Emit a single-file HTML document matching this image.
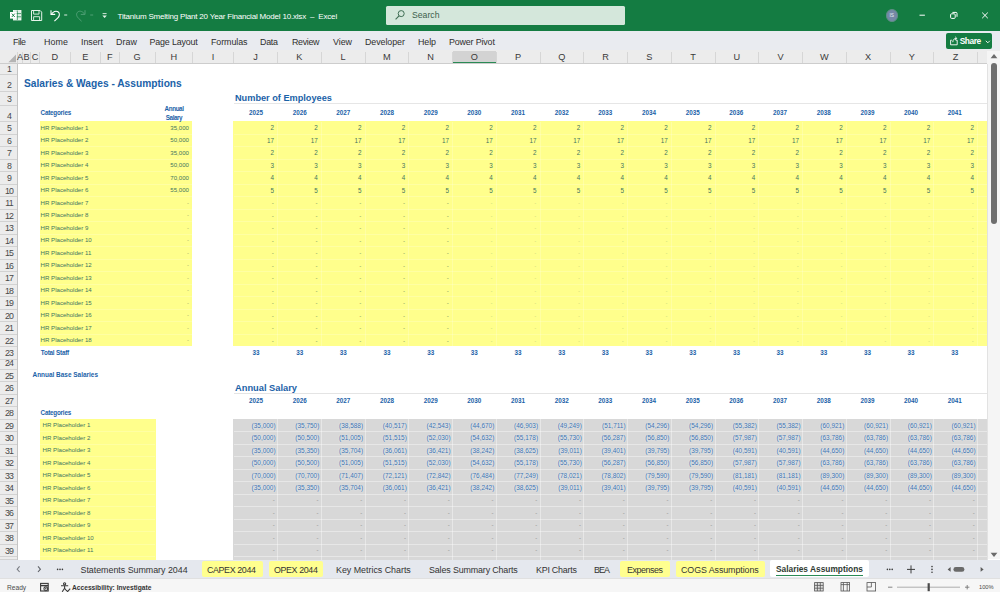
<!DOCTYPE html>
<html lang="en"><head><meta charset="utf-8"><title>Titanium Smelting Plant 20 Year Financial Model 10.xlsx - Excel</title>
<style>
html,body{margin:0;padding:0;}
body{width:1000px;height:592px;overflow:hidden;background:#fff;font-family:"Liberation Sans",Arial,sans-serif;}
#app{position:relative;width:1000px;height:592px;overflow:hidden;background:#fff;}
#app div,#app span,#app svg{position:absolute;}
#app span{white-space:nowrap;display:block;}
#app span.h{text-shadow:0 0 1px rgba(236,244,252,0.95),0 0 2px rgba(236,244,252,0.8);}
</style></head><body><div id="app">
<div style="left:0px;top:0px;width:1000px;height:30.6px;background:#147c42;"></div>
<div style="left:385.7px;top:5.8px;width:239.6px;height:19.6px;background:#d4e7db;border-radius:1.5px;"></div>
<svg style="left:394px;top:9px" width="12" height="12" viewBox="0 0 12 12"><circle cx="7.2" cy="4.6" r="3" fill="none" stroke="#3f6e54" stroke-width="1"/><path d="M5 6.9 L1.6 10.4" stroke="#3f6e54" stroke-width="1.1" fill="none"/></svg>
<span style="left:412px;top:10px;font-size:8.68px;line-height:10px;color:#3d5f4c;">Search</span>
<span style="left:117.5px;top:12px;font-size:8px;line-height:9px;color:#ffffff;letter-spacing:-0.19px;">Titanium Smelting Plant 20 Year Financial Model 10.xlsx  –  Excel</span>
<svg style="left:0;top:0" width="116" height="31" viewBox="0 0 116 31">
<g fill="none" stroke="#fff" stroke-width="1">
 <!-- excel logo -->
 <rect x="13.5" y="10.5" width="7.5" height="9.5" fill="#dff0e5" stroke="#fff" stroke-width="0.8"/>
 <path d="M13.5 13.6H21M13.5 16.8H21M17.3 10.5V20" stroke="#107c41" stroke-width="0.7"/>
 <rect x="10" y="12" width="6.6" height="6.6" fill="#fff" stroke="none"/>
 <path d="M11.8 13.6l3 3.4M14.8 13.6l-3 3.4" stroke="#107c41" stroke-width="0.9"/>
 <!-- save -->
 <path d="M31.5 10.5h8.6l1.6 1.6v8.4h-10.2z" stroke="#e6f3ea"/>
 <path d="M33.6 10.5v3.6h5.4v-3.6M33.6 20.5v-3.8h6v3.8" stroke="#e6f3ea" stroke-width="0.9"/>
 <!-- undo -->
 <path d="M51 10.2v4.2h4.2" stroke="#fff" stroke-width="1.1"/>
 <path d="M51.4 14.2c1.6-2.6 4.6-3.8 6.6-2.4 2.2 1.6 1.6 4.4-0.4 6.4l-3.2 3" stroke="#fff" stroke-width="1.1"/>
 <path d="M64.2 15h3" stroke="#d8ecdf" stroke-width="1"/>
 <!-- redo (disabled) -->
 <path d="M85 10.2v4.2h-4.2" stroke="#4f9f75" stroke-width="1"/>
 <path d="M84.6 14.2c-1.6-2.6-4.6-3.8-6.6-2.4-2.2 1.6-1.6 4.4 0.4 6.4l3.2 3" stroke="#4f9f75" stroke-width="1"/>
 <path d="M90.2 15h3" stroke="#4f9f75" stroke-width="1"/>
 <!-- customize -->
 <path d="M102.6 13.6h4" stroke="#e6f3ea" stroke-width="0.9"/>
 <path d="M102.4 15.6h4.4l-2.2 2.4z" fill="#e6f3ea" stroke="none"/>
</g></svg>
<div style="left:885.7px;top:9.4px;width:12.2px;height:12.2px;border-radius:50%;background:#7488a6;border:1px solid #5f8f86;box-sizing:border-box;"></div>
<span style="left:889.53px;top:13px;font-size:4.8px;line-height:5px;color:#e6edf5;">IS</span>
<svg style="left:900px;top:0" width="100" height="31" viewBox="0 0 100 31"><g fill="none" stroke="#fff" stroke-width="1">
<path d="M19.5 15.2h5.4"/>
<rect x="50.6" y="13.8" width="4.6" height="4.6" rx="1"/>
<path d="M52.4 12.4h3.6q1 0 1 1v3.4" />
<path d="M82.2 12.6l5.6 5.6M87.8 12.6l-5.6 5.6"/>
</g></svg>
<div style="left:0px;top:30.6px;width:1000px;height:20px;background:#e9ebf0;"></div>
<span style="left:13px;top:37px;font-size:8.9px;line-height:10px;color:#2e2e2e;letter-spacing:-0.45px;">File</span>
<span style="left:44px;top:37px;font-size:8.9px;line-height:10px;color:#2e2e2e;letter-spacing:0.09px;">Home</span>
<span style="left:81px;top:37px;font-size:8.9px;line-height:10px;color:#2e2e2e;letter-spacing:-0.05px;">Insert</span>
<span style="left:116px;top:37px;font-size:8.9px;line-height:10px;color:#2e2e2e;letter-spacing:0.08px;">Draw</span>
<span style="left:149.5px;top:37px;font-size:8.9px;line-height:10px;color:#2e2e2e;letter-spacing:-0.15px;">Page Layout</span>
<span style="left:211px;top:37px;font-size:8.9px;line-height:10px;color:#2e2e2e;letter-spacing:-0.08px;">Formulas</span>
<span style="left:260px;top:37px;font-size:8.9px;line-height:10px;color:#2e2e2e;letter-spacing:-0.27px;">Data</span>
<span style="left:292px;top:37px;font-size:8.9px;line-height:10px;color:#2e2e2e;letter-spacing:-0.34px;">Review</span>
<span style="left:333px;top:37px;font-size:8.9px;line-height:10px;color:#2e2e2e;letter-spacing:-0.04px;">View</span>
<span style="left:365px;top:37px;font-size:8.9px;line-height:10px;color:#2e2e2e;letter-spacing:-0.07px;">Developer</span>
<span style="left:418px;top:37px;font-size:8.9px;line-height:10px;color:#2e2e2e;letter-spacing:-0.1px;">Help</span>
<span style="left:449px;top:37px;font-size:8.9px;line-height:10px;color:#2e2e2e;letter-spacing:-0.15px;">Power Pivot</span>
<div style="left:946px;top:33.2px;width:46.4px;height:15.4px;background:#147c42;border-radius:2px;"></div>
<svg style="left:949px;top:35px" width="12" height="12" viewBox="0 0 12 12"><g fill="none" stroke="#fff" stroke-width="0.9"><path d="M1.6 5.2v4.6h6.6v-4.6h-1.6M1.6 5.2h1.2"/><path d="M3.8 7.2c0-2.4 1.4-3.8 3.6-3.8M6.2 1.8l1.6 1.6-1.6 1.6"/></g></svg>
<span style="left:959.7px;top:36px;font-size:8.4px;line-height:10px;color:#ffffff;letter-spacing:-0.44px;font-weight:bold;">Share</span>
<svg style="left:984.5px;top:38.5px" width="6" height="6" viewBox="0 0 6 6"><path d="M0.8 1.8l2 2 2-2" fill="none" stroke="#fff" stroke-width="0.9"/></svg>
<div style="left:0px;top:49.8px;width:1000px;height:13.7px;background:#ececec;"></div>
<div style="left:22px;top:51.6px;width:1px;height:11.9px;background:#d6d6d6;"></div>
<div style="left:30.1px;top:51.6px;width:1px;height:11.9px;background:#d6d6d6;"></div>
<div style="left:38.9px;top:51.6px;width:1px;height:11.9px;background:#d6d6d6;"></div>
<div style="left:69.5px;top:51.6px;width:1px;height:11.9px;background:#d6d6d6;"></div>
<div style="left:100.1px;top:51.6px;width:1px;height:11.9px;background:#d6d6d6;"></div>
<div style="left:118.5px;top:51.6px;width:1px;height:11.9px;background:#d6d6d6;"></div>
<div style="left:154.5px;top:51.6px;width:1px;height:11.9px;background:#d6d6d6;"></div>
<div style="left:192px;top:51.6px;width:1px;height:11.9px;background:#d6d6d6;"></div>
<div style="left:233.25px;top:51.6px;width:1px;height:11.9px;background:#d6d6d6;"></div>
<div style="left:277px;top:51.6px;width:1px;height:11.9px;background:#d6d6d6;"></div>
<div style="left:320.75px;top:51.6px;width:1px;height:11.9px;background:#d6d6d6;"></div>
<div style="left:364.5px;top:51.6px;width:1px;height:11.9px;background:#d6d6d6;"></div>
<div style="left:408.25px;top:51.6px;width:1px;height:11.9px;background:#d6d6d6;"></div>
<div style="left:452px;top:51.6px;width:1px;height:11.9px;background:#d6d6d6;"></div>
<div style="left:452.5px;top:51px;width:43.75px;height:12.5px;background:#d3d3d3;"></div>
<div style="left:452.5px;top:62.1px;width:43.75px;height:1.4px;background:#2a8a55;"></div>
<div style="left:495.75px;top:51.6px;width:1px;height:11.9px;background:#d6d6d6;"></div>
<div style="left:539.5px;top:51.6px;width:1px;height:11.9px;background:#d6d6d6;"></div>
<div style="left:583.25px;top:51.6px;width:1px;height:11.9px;background:#d6d6d6;"></div>
<div style="left:627px;top:51.6px;width:1px;height:11.9px;background:#d6d6d6;"></div>
<div style="left:670.75px;top:51.6px;width:1px;height:11.9px;background:#d6d6d6;"></div>
<div style="left:714.5px;top:51.6px;width:1px;height:11.9px;background:#d6d6d6;"></div>
<div style="left:758.25px;top:51.6px;width:1px;height:11.9px;background:#d6d6d6;"></div>
<div style="left:802px;top:51.6px;width:1px;height:11.9px;background:#d6d6d6;"></div>
<div style="left:845.75px;top:51.6px;width:1px;height:11.9px;background:#d6d6d6;"></div>
<div style="left:889.5px;top:51.6px;width:1px;height:11.9px;background:#d6d6d6;"></div>
<div style="left:933.25px;top:51.6px;width:1px;height:11.9px;background:#d6d6d6;"></div>
<div style="left:977px;top:51.6px;width:1px;height:11.9px;background:#d6d6d6;"></div>
<div style="left:986.8px;top:51.6px;width:1px;height:11.9px;background:#d6d6d6;"></div>
<div style="left:17.2px;top:51.6px;width:1px;height:11.9px;background:#d6d6d6;"></div>
<svg style="left:7px;top:54px" width="10" height="9" viewBox="0 0 10 9"><path d="M9 0.6V8.2H1.4z" fill="#b4b4b4"/></svg>
<span style="left:17.03px;top:52px;font-size:9.2px;line-height:10px;color:#3a3a3a;">A</span>
<span style="left:23.48px;top:52px;font-size:9.2px;line-height:10px;color:#3a3a3a;">B</span>
<span style="left:31.68px;top:52px;font-size:9.2px;line-height:10px;color:#3a3a3a;">C</span>
<span style="left:51.38px;top:52px;font-size:9.2px;line-height:10px;color:#3a3a3a;">D</span>
<span style="left:82.23px;top:52px;font-size:9.2px;line-height:10px;color:#3a3a3a;">E</span>
<span style="left:106.99px;top:52px;font-size:9.2px;line-height:10px;color:#3a3a3a;">F</span>
<span style="left:133.42px;top:52px;font-size:9.2px;line-height:10px;color:#3a3a3a;">G</span>
<span style="left:170.43px;top:52px;font-size:9.2px;line-height:10px;color:#3a3a3a;">H</span>
<span style="left:211.85px;top:52px;font-size:9.2px;line-height:10px;color:#3a3a3a;">I</span>
<span style="left:253.32px;top:52px;font-size:9.2px;line-height:10px;color:#3a3a3a;">J</span>
<span style="left:296.31px;top:52px;font-size:9.2px;line-height:10px;color:#3a3a3a;">K</span>
<span style="left:340.57px;top:52px;font-size:9.2px;line-height:10px;color:#3a3a3a;">L</span>
<span style="left:383.04px;top:52px;font-size:9.2px;line-height:10px;color:#3a3a3a;">M</span>
<span style="left:427.3px;top:52px;font-size:9.2px;line-height:10px;color:#3a3a3a;">N</span>
<span style="left:470.8px;top:52px;font-size:9.2px;line-height:10px;color:#3a3a3a;">O</span>
<span style="left:515.06px;top:52px;font-size:9.2px;line-height:10px;color:#3a3a3a;">P</span>
<span style="left:558.3px;top:52px;font-size:9.2px;line-height:10px;color:#3a3a3a;">Q</span>
<span style="left:602.3px;top:52px;font-size:9.2px;line-height:10px;color:#3a3a3a;">R</span>
<span style="left:646.31px;top:52px;font-size:9.2px;line-height:10px;color:#3a3a3a;">S</span>
<span style="left:690.32px;top:52px;font-size:9.2px;line-height:10px;color:#3a3a3a;">T</span>
<span style="left:733.55px;top:52px;font-size:9.2px;line-height:10px;color:#3a3a3a;">U</span>
<span style="left:777.56px;top:52px;font-size:9.2px;line-height:10px;color:#3a3a3a;">V</span>
<span style="left:820.03px;top:52px;font-size:9.2px;line-height:10px;color:#3a3a3a;">W</span>
<span style="left:865.06px;top:52px;font-size:9.2px;line-height:10px;color:#3a3a3a;">X</span>
<span style="left:908.81px;top:52px;font-size:9.2px;line-height:10px;color:#3a3a3a;">Y</span>
<span style="left:952.82px;top:52px;font-size:9.2px;line-height:10px;color:#3a3a3a;">Z</span>
<div style="left:0px;top:63px;width:987.3px;height:1px;background:#cdcdcd;"></div>
<div style="left:0px;top:63.5px;width:17.7px;height:496px;background:#ececec;"></div>
<div style="left:0px;top:73.8px;width:17.7px;height:1px;background:#d2d2d2;"></div>
<span style="left:6.95px;top:64px;font-size:8.8px;line-height:10px;color:#484848;letter-spacing:-0.3px;">1</span>
<div style="left:0px;top:90.5px;width:17.7px;height:1px;background:#d2d2d2;"></div>
<span style="left:6.95px;top:80px;font-size:8.8px;line-height:10px;color:#484848;letter-spacing:-0.3px;">2</span>
<div style="left:0px;top:104.5px;width:17.7px;height:1px;background:#d2d2d2;"></div>
<span style="left:6.95px;top:94px;font-size:8.8px;line-height:10px;color:#484848;letter-spacing:-0.3px;">3</span>
<div style="left:0px;top:121px;width:17.7px;height:1px;background:#d2d2d2;"></div>
<span style="left:6.95px;top:111px;font-size:8.8px;line-height:10px;color:#484848;letter-spacing:-0.3px;">4</span>
<div style="left:0px;top:133.5px;width:17.7px;height:1px;background:#d2d2d2;"></div>
<span style="left:6.95px;top:123px;font-size:8.8px;line-height:10px;color:#484848;letter-spacing:-0.3px;">5</span>
<div style="left:0px;top:146px;width:17.7px;height:1px;background:#d2d2d2;"></div>
<span style="left:6.95px;top:136px;font-size:8.8px;line-height:10px;color:#484848;letter-spacing:-0.3px;">6</span>
<div style="left:0px;top:158.5px;width:17.7px;height:1px;background:#d2d2d2;"></div>
<span style="left:6.95px;top:148px;font-size:8.8px;line-height:10px;color:#484848;letter-spacing:-0.3px;">7</span>
<div style="left:0px;top:171px;width:17.7px;height:1px;background:#d2d2d2;"></div>
<span style="left:6.95px;top:161px;font-size:8.8px;line-height:10px;color:#484848;letter-spacing:-0.3px;">8</span>
<div style="left:0px;top:183.5px;width:17.7px;height:1px;background:#d2d2d2;"></div>
<span style="left:6.95px;top:173px;font-size:8.8px;line-height:10px;color:#484848;letter-spacing:-0.3px;">9</span>
<div style="left:0px;top:196px;width:17.7px;height:1px;background:#d2d2d2;"></div>
<span style="left:4.93px;top:186px;font-size:8.8px;line-height:10px;color:#484848;letter-spacing:-0.85px;">10</span>
<div style="left:0px;top:208.5px;width:17.7px;height:1px;background:#d2d2d2;"></div>
<span style="left:5.26px;top:198px;font-size:8.8px;line-height:10px;color:#484848;letter-spacing:-0.85px;">11</span>
<div style="left:0px;top:221px;width:17.7px;height:1px;background:#d2d2d2;"></div>
<span style="left:4.93px;top:211px;font-size:8.8px;line-height:10px;color:#484848;letter-spacing:-0.85px;">12</span>
<div style="left:0px;top:233.5px;width:17.7px;height:1px;background:#d2d2d2;"></div>
<span style="left:4.93px;top:223px;font-size:8.8px;line-height:10px;color:#484848;letter-spacing:-0.85px;">13</span>
<div style="left:0px;top:246px;width:17.7px;height:1px;background:#d2d2d2;"></div>
<span style="left:4.93px;top:236px;font-size:8.8px;line-height:10px;color:#484848;letter-spacing:-0.85px;">14</span>
<div style="left:0px;top:258.5px;width:17.7px;height:1px;background:#d2d2d2;"></div>
<span style="left:4.93px;top:248px;font-size:8.8px;line-height:10px;color:#484848;letter-spacing:-0.85px;">15</span>
<div style="left:0px;top:271px;width:17.7px;height:1px;background:#d2d2d2;"></div>
<span style="left:4.93px;top:261px;font-size:8.8px;line-height:10px;color:#484848;letter-spacing:-0.85px;">16</span>
<div style="left:0px;top:283.5px;width:17.7px;height:1px;background:#d2d2d2;"></div>
<span style="left:4.93px;top:273px;font-size:8.8px;line-height:10px;color:#484848;letter-spacing:-0.85px;">17</span>
<div style="left:0px;top:296px;width:17.7px;height:1px;background:#d2d2d2;"></div>
<span style="left:4.93px;top:286px;font-size:8.8px;line-height:10px;color:#484848;letter-spacing:-0.85px;">18</span>
<div style="left:0px;top:308.5px;width:17.7px;height:1px;background:#d2d2d2;"></div>
<span style="left:4.93px;top:298px;font-size:8.8px;line-height:10px;color:#484848;letter-spacing:-0.85px;">19</span>
<div style="left:0px;top:321px;width:17.7px;height:1px;background:#d2d2d2;"></div>
<span style="left:4.93px;top:311px;font-size:8.8px;line-height:10px;color:#484848;letter-spacing:-0.85px;">20</span>
<div style="left:0px;top:333.5px;width:17.7px;height:1px;background:#d2d2d2;"></div>
<span style="left:4.93px;top:323px;font-size:8.8px;line-height:10px;color:#484848;letter-spacing:-0.85px;">21</span>
<div style="left:0px;top:346px;width:17.7px;height:1px;background:#d2d2d2;"></div>
<span style="left:4.93px;top:336px;font-size:8.8px;line-height:10px;color:#484848;letter-spacing:-0.85px;">22</span>
<div style="left:0px;top:358.5px;width:17.7px;height:1px;background:#d2d2d2;"></div>
<span style="left:4.93px;top:348px;font-size:8.8px;line-height:10px;color:#484848;letter-spacing:-0.85px;">23</span>
<div style="left:0px;top:368.5px;width:17.7px;height:1px;background:#d2d2d2;"></div>
<span style="left:4.93px;top:358px;font-size:8.8px;line-height:10px;color:#484848;letter-spacing:-0.85px;">24</span>
<div style="left:0px;top:381px;width:17.7px;height:1px;background:#d2d2d2;"></div>
<span style="left:4.93px;top:371px;font-size:8.8px;line-height:10px;color:#484848;letter-spacing:-0.85px;">25</span>
<div style="left:0px;top:393.5px;width:17.7px;height:1px;background:#d2d2d2;"></div>
<span style="left:4.93px;top:383px;font-size:8.8px;line-height:10px;color:#484848;letter-spacing:-0.85px;">26</span>
<div style="left:0px;top:406px;width:17.7px;height:1px;background:#d2d2d2;"></div>
<span style="left:4.93px;top:396px;font-size:8.8px;line-height:10px;color:#484848;letter-spacing:-0.85px;">27</span>
<div style="left:0px;top:418.5px;width:17.7px;height:1px;background:#d2d2d2;"></div>
<span style="left:4.93px;top:408px;font-size:8.8px;line-height:10px;color:#484848;letter-spacing:-0.85px;">28</span>
<div style="left:0px;top:431px;width:17.7px;height:1px;background:#d2d2d2;"></div>
<span style="left:4.93px;top:421px;font-size:8.8px;line-height:10px;color:#484848;letter-spacing:-0.85px;">29</span>
<div style="left:0px;top:443.5px;width:17.7px;height:1px;background:#d2d2d2;"></div>
<span style="left:4.93px;top:433px;font-size:8.8px;line-height:10px;color:#484848;letter-spacing:-0.85px;">30</span>
<div style="left:0px;top:456px;width:17.7px;height:1px;background:#d2d2d2;"></div>
<span style="left:4.93px;top:446px;font-size:8.8px;line-height:10px;color:#484848;letter-spacing:-0.85px;">31</span>
<div style="left:0px;top:468.5px;width:17.7px;height:1px;background:#d2d2d2;"></div>
<span style="left:4.93px;top:458px;font-size:8.8px;line-height:10px;color:#484848;letter-spacing:-0.85px;">32</span>
<div style="left:0px;top:481px;width:17.7px;height:1px;background:#d2d2d2;"></div>
<span style="left:4.93px;top:471px;font-size:8.8px;line-height:10px;color:#484848;letter-spacing:-0.85px;">33</span>
<div style="left:0px;top:493.5px;width:17.7px;height:1px;background:#d2d2d2;"></div>
<span style="left:4.93px;top:483px;font-size:8.8px;line-height:10px;color:#484848;letter-spacing:-0.85px;">34</span>
<div style="left:0px;top:506px;width:17.7px;height:1px;background:#d2d2d2;"></div>
<span style="left:4.93px;top:496px;font-size:8.8px;line-height:10px;color:#484848;letter-spacing:-0.85px;">35</span>
<div style="left:0px;top:518.5px;width:17.7px;height:1px;background:#d2d2d2;"></div>
<span style="left:4.93px;top:508px;font-size:8.8px;line-height:10px;color:#484848;letter-spacing:-0.85px;">36</span>
<div style="left:0px;top:531px;width:17.7px;height:1px;background:#d2d2d2;"></div>
<span style="left:4.93px;top:521px;font-size:8.8px;line-height:10px;color:#484848;letter-spacing:-0.85px;">37</span>
<div style="left:0px;top:543.5px;width:17.7px;height:1px;background:#d2d2d2;"></div>
<span style="left:4.93px;top:533px;font-size:8.8px;line-height:10px;color:#484848;letter-spacing:-0.85px;">38</span>
<div style="left:0px;top:556px;width:17.7px;height:1px;background:#d2d2d2;"></div>
<span style="left:4.93px;top:546px;font-size:8.8px;line-height:10px;color:#484848;letter-spacing:-0.85px;">39</span>
<div style="left:0px;top:559px;width:17.7px;height:1px;background:#d2d2d2;"></div>
<div style="left:17.2px;top:63.5px;width:1px;height:496px;background:#c4c4c4;"></div>
<div style="left:39.7px;top:121.2px;width:152.1px;height:225.3px;background:#ffff8c;"></div>
<div style="left:233.35px;top:121.2px;width:753.95px;height:225.3px;background:#ffff8c;"></div>
<div style="left:39.7px;top:419px;width:116.2px;height:140.5px;background:#ffff8c;"></div>
<div style="left:233.35px;top:419px;width:753.95px;height:140.5px;background:#d8d8d8;"></div>
<div style="left:39.4px;top:133.5px;width:153.1px;height:0.8px;background:rgba(255,255,255,0.2);"></div>
<div style="left:233.75px;top:133.5px;width:753.55px;height:0.8px;background:rgba(255,255,255,0.2);"></div>
<div style="left:39.4px;top:146px;width:153.1px;height:0.8px;background:rgba(255,255,255,0.2);"></div>
<div style="left:233.75px;top:146px;width:753.55px;height:0.8px;background:rgba(255,255,255,0.2);"></div>
<div style="left:39.4px;top:158.5px;width:153.1px;height:0.8px;background:rgba(255,255,255,0.2);"></div>
<div style="left:233.75px;top:158.5px;width:753.55px;height:0.8px;background:rgba(255,255,255,0.2);"></div>
<div style="left:39.4px;top:171px;width:153.1px;height:0.8px;background:rgba(255,255,255,0.2);"></div>
<div style="left:233.75px;top:171px;width:753.55px;height:0.8px;background:rgba(255,255,255,0.2);"></div>
<div style="left:39.4px;top:183.5px;width:153.1px;height:0.8px;background:rgba(255,255,255,0.2);"></div>
<div style="left:233.75px;top:183.5px;width:753.55px;height:0.8px;background:rgba(255,255,255,0.2);"></div>
<div style="left:39.4px;top:196px;width:153.1px;height:0.8px;background:rgba(255,255,255,0.2);"></div>
<div style="left:233.75px;top:196px;width:753.55px;height:0.8px;background:rgba(255,255,255,0.2);"></div>
<div style="left:39.4px;top:208.5px;width:153.1px;height:0.8px;background:rgba(255,255,255,0.2);"></div>
<div style="left:233.75px;top:208.5px;width:753.55px;height:0.8px;background:rgba(255,255,255,0.2);"></div>
<div style="left:39.4px;top:221px;width:153.1px;height:0.8px;background:rgba(255,255,255,0.2);"></div>
<div style="left:233.75px;top:221px;width:753.55px;height:0.8px;background:rgba(255,255,255,0.2);"></div>
<div style="left:39.4px;top:233.5px;width:153.1px;height:0.8px;background:rgba(255,255,255,0.2);"></div>
<div style="left:233.75px;top:233.5px;width:753.55px;height:0.8px;background:rgba(255,255,255,0.2);"></div>
<div style="left:39.4px;top:246px;width:153.1px;height:0.8px;background:rgba(255,255,255,0.2);"></div>
<div style="left:233.75px;top:246px;width:753.55px;height:0.8px;background:rgba(255,255,255,0.2);"></div>
<div style="left:39.4px;top:258.5px;width:153.1px;height:0.8px;background:rgba(255,255,255,0.2);"></div>
<div style="left:233.75px;top:258.5px;width:753.55px;height:0.8px;background:rgba(255,255,255,0.2);"></div>
<div style="left:39.4px;top:271px;width:153.1px;height:0.8px;background:rgba(255,255,255,0.2);"></div>
<div style="left:233.75px;top:271px;width:753.55px;height:0.8px;background:rgba(255,255,255,0.2);"></div>
<div style="left:39.4px;top:283.5px;width:153.1px;height:0.8px;background:rgba(255,255,255,0.2);"></div>
<div style="left:233.75px;top:283.5px;width:753.55px;height:0.8px;background:rgba(255,255,255,0.2);"></div>
<div style="left:39.4px;top:296px;width:153.1px;height:0.8px;background:rgba(255,255,255,0.2);"></div>
<div style="left:233.75px;top:296px;width:753.55px;height:0.8px;background:rgba(255,255,255,0.2);"></div>
<div style="left:39.4px;top:308.5px;width:153.1px;height:0.8px;background:rgba(255,255,255,0.2);"></div>
<div style="left:233.75px;top:308.5px;width:753.55px;height:0.8px;background:rgba(255,255,255,0.2);"></div>
<div style="left:39.4px;top:321px;width:153.1px;height:0.8px;background:rgba(255,255,255,0.2);"></div>
<div style="left:233.75px;top:321px;width:753.55px;height:0.8px;background:rgba(255,255,255,0.2);"></div>
<div style="left:39.4px;top:333.5px;width:153.1px;height:0.8px;background:rgba(255,255,255,0.2);"></div>
<div style="left:233.75px;top:333.5px;width:753.55px;height:0.8px;background:rgba(255,255,255,0.2);"></div>
<div style="left:39.4px;top:346px;width:153.1px;height:0.8px;background:rgba(255,255,255,0.2);"></div>
<div style="left:233.75px;top:346px;width:753.55px;height:0.8px;background:rgba(255,255,255,0.2);"></div>
<div style="left:39.4px;top:431px;width:115.6px;height:0.8px;background:rgba(255,255,255,0.2);"></div>
<div style="left:233.75px;top:431px;width:753.55px;height:1px;background:rgba(255,255,255,0.4);"></div>
<div style="left:39.4px;top:443.5px;width:115.6px;height:0.8px;background:rgba(255,255,255,0.2);"></div>
<div style="left:233.75px;top:443.5px;width:753.55px;height:1px;background:rgba(255,255,255,0.4);"></div>
<div style="left:39.4px;top:456px;width:115.6px;height:0.8px;background:rgba(255,255,255,0.2);"></div>
<div style="left:233.75px;top:456px;width:753.55px;height:1px;background:rgba(255,255,255,0.4);"></div>
<div style="left:39.4px;top:468.5px;width:115.6px;height:0.8px;background:rgba(255,255,255,0.2);"></div>
<div style="left:233.75px;top:468.5px;width:753.55px;height:1px;background:rgba(255,255,255,0.4);"></div>
<div style="left:39.4px;top:481px;width:115.6px;height:0.8px;background:rgba(255,255,255,0.2);"></div>
<div style="left:233.75px;top:481px;width:753.55px;height:1px;background:rgba(255,255,255,0.4);"></div>
<div style="left:39.4px;top:493.5px;width:115.6px;height:0.8px;background:rgba(255,255,255,0.2);"></div>
<div style="left:233.75px;top:493.5px;width:753.55px;height:1px;background:rgba(255,255,255,0.4);"></div>
<div style="left:39.4px;top:506px;width:115.6px;height:0.8px;background:rgba(255,255,255,0.2);"></div>
<div style="left:233.75px;top:506px;width:753.55px;height:1px;background:rgba(255,255,255,0.4);"></div>
<div style="left:39.4px;top:518.5px;width:115.6px;height:0.8px;background:rgba(255,255,255,0.2);"></div>
<div style="left:233.75px;top:518.5px;width:753.55px;height:1px;background:rgba(255,255,255,0.4);"></div>
<div style="left:39.4px;top:531px;width:115.6px;height:0.8px;background:rgba(255,255,255,0.2);"></div>
<div style="left:233.75px;top:531px;width:753.55px;height:1px;background:rgba(255,255,255,0.4);"></div>
<div style="left:39.4px;top:543.5px;width:115.6px;height:0.8px;background:rgba(255,255,255,0.2);"></div>
<div style="left:233.75px;top:543.5px;width:753.55px;height:1px;background:rgba(255,255,255,0.4);"></div>
<div style="left:39.4px;top:556px;width:115.6px;height:0.8px;background:rgba(255,255,255,0.2);"></div>
<div style="left:233.75px;top:556px;width:753.55px;height:1px;background:rgba(255,255,255,0.4);"></div>
<div style="left:277px;top:121.5px;width:0.9px;height:225px;background:rgba(255,255,255,0.2);"></div>
<div style="left:277px;top:419px;width:1px;height:140.5px;background:rgba(255,255,255,0.4);"></div>
<div style="left:320.75px;top:121.5px;width:0.9px;height:225px;background:rgba(255,255,255,0.2);"></div>
<div style="left:320.75px;top:419px;width:1px;height:140.5px;background:rgba(255,255,255,0.4);"></div>
<div style="left:364.5px;top:121.5px;width:0.9px;height:225px;background:rgba(255,255,255,0.2);"></div>
<div style="left:364.5px;top:419px;width:1px;height:140.5px;background:rgba(255,255,255,0.4);"></div>
<div style="left:408.25px;top:121.5px;width:0.9px;height:225px;background:rgba(255,255,255,0.2);"></div>
<div style="left:408.25px;top:419px;width:1px;height:140.5px;background:rgba(255,255,255,0.4);"></div>
<div style="left:452px;top:121.5px;width:0.9px;height:225px;background:rgba(255,255,255,0.2);"></div>
<div style="left:452px;top:419px;width:1px;height:140.5px;background:rgba(255,255,255,0.4);"></div>
<div style="left:495.75px;top:121.5px;width:0.9px;height:225px;background:rgba(255,255,255,0.2);"></div>
<div style="left:495.75px;top:419px;width:1px;height:140.5px;background:rgba(255,255,255,0.4);"></div>
<div style="left:539.5px;top:121.5px;width:0.9px;height:225px;background:rgba(255,255,255,0.2);"></div>
<div style="left:539.5px;top:419px;width:1px;height:140.5px;background:rgba(255,255,255,0.4);"></div>
<div style="left:583.25px;top:121.5px;width:0.9px;height:225px;background:rgba(255,255,255,0.2);"></div>
<div style="left:583.25px;top:419px;width:1px;height:140.5px;background:rgba(255,255,255,0.4);"></div>
<div style="left:627px;top:121.5px;width:0.9px;height:225px;background:rgba(255,255,255,0.2);"></div>
<div style="left:627px;top:419px;width:1px;height:140.5px;background:rgba(255,255,255,0.4);"></div>
<div style="left:670.75px;top:121.5px;width:0.9px;height:225px;background:rgba(255,255,255,0.2);"></div>
<div style="left:670.75px;top:419px;width:1px;height:140.5px;background:rgba(255,255,255,0.4);"></div>
<div style="left:714.5px;top:121.5px;width:0.9px;height:225px;background:rgba(255,255,255,0.2);"></div>
<div style="left:714.5px;top:419px;width:1px;height:140.5px;background:rgba(255,255,255,0.4);"></div>
<div style="left:758.25px;top:121.5px;width:0.9px;height:225px;background:rgba(255,255,255,0.2);"></div>
<div style="left:758.25px;top:419px;width:1px;height:140.5px;background:rgba(255,255,255,0.4);"></div>
<div style="left:802px;top:121.5px;width:0.9px;height:225px;background:rgba(255,255,255,0.2);"></div>
<div style="left:802px;top:419px;width:1px;height:140.5px;background:rgba(255,255,255,0.4);"></div>
<div style="left:845.75px;top:121.5px;width:0.9px;height:225px;background:rgba(255,255,255,0.2);"></div>
<div style="left:845.75px;top:419px;width:1px;height:140.5px;background:rgba(255,255,255,0.4);"></div>
<div style="left:889.5px;top:121.5px;width:0.9px;height:225px;background:rgba(255,255,255,0.2);"></div>
<div style="left:889.5px;top:419px;width:1px;height:140.5px;background:rgba(255,255,255,0.4);"></div>
<div style="left:933.25px;top:121.5px;width:0.9px;height:225px;background:rgba(255,255,255,0.2);"></div>
<div style="left:933.25px;top:419px;width:1px;height:140.5px;background:rgba(255,255,255,0.4);"></div>
<div style="left:977px;top:121.5px;width:0.9px;height:225px;background:rgba(255,255,255,0.2);"></div>
<div style="left:977px;top:419px;width:1px;height:140.5px;background:rgba(255,255,255,0.4);"></div>
<div style="left:233.75px;top:103.3px;width:753.55px;height:0.9px;background:#e6e6e6;"></div>
<div style="left:233.75px;top:393.4px;width:753.55px;height:0.9px;background:#e4e4e4;"></div>
<span style="left:24px;top:78px;font-size:10.2px;line-height:11px;color:#1b62a8;font-weight:bold;">Salaries &amp; Wages - Assumptions</span>
<span style="left:235px;top:93px;font-size:9.19px;line-height:10px;color:#1b62a8;font-weight:bold;">Number of Employees</span>
<span style="left:32.5px;top:371px;font-size:6.44px;line-height:7px;color:#1b62a8;font-weight:bold;">Annual Base Salaries</span>
<span style="left:235px;top:383px;font-size:9.3px;line-height:10px;color:#1b62a8;font-weight:bold;">Annual Salary</span>
<span style="left:40.6px;top:109px;font-size:6.3px;line-height:7px;color:#1b62a8;letter-spacing:-0.22px;font-weight:bold;">Categories</span>
<span style="left:164.6px;top:105px;font-size:6.3px;line-height:7px;color:#1b62a8;letter-spacing:-0.39px;font-weight:bold;">Annual</span>
<span style="left:165.8px;top:114px;font-size:6.3px;line-height:7px;color:#1b62a8;letter-spacing:-0.42px;font-weight:bold;">Salary</span>
<span style="left:40.6px;top:409px;font-size:6.3px;line-height:7px;color:#1b62a8;letter-spacing:-0.22px;font-weight:bold;">Categories</span>
<span style="left:249.02px;top:109px;font-size:6.3px;line-height:7px;color:#1b62a8;font-weight:bold;">2025</span>
<span style="left:249.02px;top:397px;font-size:6.3px;line-height:7px;color:#1b62a8;font-weight:bold;">2025</span>
<span style="left:252.52px;top:349px;font-size:6.3px;line-height:7px;color:#1b62a8;font-weight:bold;">33</span>
<span style="left:292.69px;top:109px;font-size:6.3px;line-height:7px;color:#1b62a8;font-weight:bold;">2026</span>
<span style="left:292.69px;top:397px;font-size:6.3px;line-height:7px;color:#1b62a8;font-weight:bold;">2026</span>
<span style="left:296.19px;top:349px;font-size:6.3px;line-height:7px;color:#1b62a8;font-weight:bold;">33</span>
<span style="left:336.35px;top:109px;font-size:6.3px;line-height:7px;color:#1b62a8;font-weight:bold;">2027</span>
<span style="left:336.35px;top:397px;font-size:6.3px;line-height:7px;color:#1b62a8;font-weight:bold;">2027</span>
<span style="left:339.86px;top:349px;font-size:6.3px;line-height:7px;color:#1b62a8;font-weight:bold;">33</span>
<span style="left:380.02px;top:109px;font-size:6.3px;line-height:7px;color:#1b62a8;font-weight:bold;">2028</span>
<span style="left:380.02px;top:397px;font-size:6.3px;line-height:7px;color:#1b62a8;font-weight:bold;">2028</span>
<span style="left:383.53px;top:349px;font-size:6.3px;line-height:7px;color:#1b62a8;font-weight:bold;">33</span>
<span style="left:423.69px;top:109px;font-size:6.3px;line-height:7px;color:#1b62a8;font-weight:bold;">2029</span>
<span style="left:423.69px;top:397px;font-size:6.3px;line-height:7px;color:#1b62a8;font-weight:bold;">2029</span>
<span style="left:427.2px;top:349px;font-size:6.3px;line-height:7px;color:#1b62a8;font-weight:bold;">33</span>
<span style="left:467.36px;top:109px;font-size:6.3px;line-height:7px;color:#1b62a8;font-weight:bold;">2030</span>
<span style="left:467.36px;top:397px;font-size:6.3px;line-height:7px;color:#1b62a8;font-weight:bold;">2030</span>
<span style="left:470.86px;top:349px;font-size:6.3px;line-height:7px;color:#1b62a8;font-weight:bold;">33</span>
<span style="left:511.03px;top:109px;font-size:6.3px;line-height:7px;color:#1b62a8;font-weight:bold;">2031</span>
<span style="left:511.03px;top:397px;font-size:6.3px;line-height:7px;color:#1b62a8;font-weight:bold;">2031</span>
<span style="left:514.53px;top:349px;font-size:6.3px;line-height:7px;color:#1b62a8;font-weight:bold;">33</span>
<span style="left:554.7px;top:109px;font-size:6.3px;line-height:7px;color:#1b62a8;font-weight:bold;">2032</span>
<span style="left:554.7px;top:397px;font-size:6.3px;line-height:7px;color:#1b62a8;font-weight:bold;">2032</span>
<span style="left:558.2px;top:349px;font-size:6.3px;line-height:7px;color:#1b62a8;font-weight:bold;">33</span>
<span style="left:598.37px;top:109px;font-size:6.3px;line-height:7px;color:#1b62a8;font-weight:bold;">2033</span>
<span style="left:598.37px;top:397px;font-size:6.3px;line-height:7px;color:#1b62a8;font-weight:bold;">2033</span>
<span style="left:601.87px;top:349px;font-size:6.3px;line-height:7px;color:#1b62a8;font-weight:bold;">33</span>
<span style="left:642.04px;top:109px;font-size:6.3px;line-height:7px;color:#1b62a8;font-weight:bold;">2034</span>
<span style="left:642.04px;top:397px;font-size:6.3px;line-height:7px;color:#1b62a8;font-weight:bold;">2034</span>
<span style="left:645.54px;top:349px;font-size:6.3px;line-height:7px;color:#1b62a8;font-weight:bold;">33</span>
<span style="left:685.7px;top:109px;font-size:6.3px;line-height:7px;color:#1b62a8;font-weight:bold;">2035</span>
<span style="left:685.7px;top:397px;font-size:6.3px;line-height:7px;color:#1b62a8;font-weight:bold;">2035</span>
<span style="left:689.21px;top:349px;font-size:6.3px;line-height:7px;color:#1b62a8;font-weight:bold;">33</span>
<span style="left:729.37px;top:109px;font-size:6.3px;line-height:7px;color:#1b62a8;font-weight:bold;">2036</span>
<span style="left:729.37px;top:397px;font-size:6.3px;line-height:7px;color:#1b62a8;font-weight:bold;">2036</span>
<span style="left:732.88px;top:349px;font-size:6.3px;line-height:7px;color:#1b62a8;font-weight:bold;">33</span>
<span style="left:773.04px;top:109px;font-size:6.3px;line-height:7px;color:#1b62a8;font-weight:bold;">2037</span>
<span style="left:773.04px;top:397px;font-size:6.3px;line-height:7px;color:#1b62a8;font-weight:bold;">2037</span>
<span style="left:776.55px;top:349px;font-size:6.3px;line-height:7px;color:#1b62a8;font-weight:bold;">33</span>
<span style="left:816.71px;top:109px;font-size:6.3px;line-height:7px;color:#1b62a8;font-weight:bold;">2038</span>
<span style="left:816.71px;top:397px;font-size:6.3px;line-height:7px;color:#1b62a8;font-weight:bold;">2038</span>
<span style="left:820.21px;top:349px;font-size:6.3px;line-height:7px;color:#1b62a8;font-weight:bold;">33</span>
<span style="left:860.38px;top:109px;font-size:6.3px;line-height:7px;color:#1b62a8;font-weight:bold;">2039</span>
<span style="left:860.38px;top:397px;font-size:6.3px;line-height:7px;color:#1b62a8;font-weight:bold;">2039</span>
<span style="left:863.88px;top:349px;font-size:6.3px;line-height:7px;color:#1b62a8;font-weight:bold;">33</span>
<span style="left:904.05px;top:109px;font-size:6.3px;line-height:7px;color:#1b62a8;font-weight:bold;">2040</span>
<span style="left:904.05px;top:397px;font-size:6.3px;line-height:7px;color:#1b62a8;font-weight:bold;">2040</span>
<span style="left:907.55px;top:349px;font-size:6.3px;line-height:7px;color:#1b62a8;font-weight:bold;">33</span>
<span style="left:947.72px;top:109px;font-size:6.3px;line-height:7px;color:#1b62a8;font-weight:bold;">2041</span>
<span style="left:947.72px;top:397px;font-size:6.3px;line-height:7px;color:#1b62a8;font-weight:bold;">2041</span>
<span style="left:951.22px;top:349px;font-size:6.3px;line-height:7px;color:#1b62a8;font-weight:bold;">33</span>
<span style="left:40.6px;top:124px;font-size:6.1px;line-height:7px;color:#3f7560;">HR Placeholder 1</span>
<span style="left:170.34px;top:124px;font-size:6.1px;line-height:7px;color:#3f7560;">35,000</span>
<span style="left:270.4px;top:124px;font-size:6.3px;line-height:7px;color:#3f7560;">2</span>
<span style="left:314.15px;top:124px;font-size:6.3px;line-height:7px;color:#3f7560;">2</span>
<span style="left:357.9px;top:124px;font-size:6.3px;line-height:7px;color:#3f7560;">2</span>
<span style="left:401.65px;top:124px;font-size:6.3px;line-height:7px;color:#3f7560;">2</span>
<span style="left:445.4px;top:124px;font-size:6.3px;line-height:7px;color:#3f7560;">2</span>
<span style="left:489.15px;top:124px;font-size:6.3px;line-height:7px;color:#3f7560;">2</span>
<span style="left:532.9px;top:124px;font-size:6.3px;line-height:7px;color:#3f7560;">2</span>
<span style="left:576.65px;top:124px;font-size:6.3px;line-height:7px;color:#3f7560;">2</span>
<span style="left:620.4px;top:124px;font-size:6.3px;line-height:7px;color:#3f7560;">2</span>
<span style="left:664.15px;top:124px;font-size:6.3px;line-height:7px;color:#3f7560;">2</span>
<span style="left:707.9px;top:124px;font-size:6.3px;line-height:7px;color:#3f7560;">2</span>
<span style="left:751.65px;top:124px;font-size:6.3px;line-height:7px;color:#3f7560;">2</span>
<span style="left:795.4px;top:124px;font-size:6.3px;line-height:7px;color:#3f7560;">2</span>
<span style="left:839.15px;top:124px;font-size:6.3px;line-height:7px;color:#3f7560;">2</span>
<span style="left:882.9px;top:124px;font-size:6.3px;line-height:7px;color:#3f7560;">2</span>
<span style="left:926.65px;top:124px;font-size:6.3px;line-height:7px;color:#3f7560;">2</span>
<span style="left:970.4px;top:124px;font-size:6.3px;line-height:7px;color:#3f7560;">2</span>
<span style="left:40.6px;top:136px;font-size:6.1px;line-height:7px;color:#3f7560;">HR Placeholder 2</span>
<span style="left:170.34px;top:136px;font-size:6.1px;line-height:7px;color:#3f7560;">50,000</span>
<span style="left:266.89px;top:137px;font-size:6.3px;line-height:7px;color:#3f7560;">17</span>
<span style="left:310.64px;top:137px;font-size:6.3px;line-height:7px;color:#3f7560;">17</span>
<span style="left:354.39px;top:137px;font-size:6.3px;line-height:7px;color:#3f7560;">17</span>
<span style="left:398.14px;top:137px;font-size:6.3px;line-height:7px;color:#3f7560;">17</span>
<span style="left:441.89px;top:137px;font-size:6.3px;line-height:7px;color:#3f7560;">17</span>
<span style="left:485.64px;top:137px;font-size:6.3px;line-height:7px;color:#3f7560;">17</span>
<span style="left:529.39px;top:137px;font-size:6.3px;line-height:7px;color:#3f7560;">17</span>
<span style="left:573.14px;top:137px;font-size:6.3px;line-height:7px;color:#3f7560;">17</span>
<span style="left:616.89px;top:137px;font-size:6.3px;line-height:7px;color:#3f7560;">17</span>
<span style="left:660.64px;top:137px;font-size:6.3px;line-height:7px;color:#3f7560;">17</span>
<span style="left:704.39px;top:137px;font-size:6.3px;line-height:7px;color:#3f7560;">17</span>
<span style="left:748.14px;top:137px;font-size:6.3px;line-height:7px;color:#3f7560;">17</span>
<span style="left:791.89px;top:137px;font-size:6.3px;line-height:7px;color:#3f7560;">17</span>
<span style="left:835.64px;top:137px;font-size:6.3px;line-height:7px;color:#3f7560;">17</span>
<span style="left:879.39px;top:137px;font-size:6.3px;line-height:7px;color:#3f7560;">17</span>
<span style="left:923.14px;top:137px;font-size:6.3px;line-height:7px;color:#3f7560;">17</span>
<span style="left:966.89px;top:137px;font-size:6.3px;line-height:7px;color:#3f7560;">17</span>
<span style="left:40.6px;top:149px;font-size:6.1px;line-height:7px;color:#3f7560;">HR Placeholder 3</span>
<span style="left:170.34px;top:149px;font-size:6.1px;line-height:7px;color:#3f7560;">35,000</span>
<span style="left:270.4px;top:149px;font-size:6.3px;line-height:7px;color:#3f7560;">2</span>
<span style="left:314.15px;top:149px;font-size:6.3px;line-height:7px;color:#3f7560;">2</span>
<span style="left:357.9px;top:149px;font-size:6.3px;line-height:7px;color:#3f7560;">2</span>
<span style="left:401.65px;top:149px;font-size:6.3px;line-height:7px;color:#3f7560;">2</span>
<span style="left:445.4px;top:149px;font-size:6.3px;line-height:7px;color:#3f7560;">2</span>
<span style="left:489.15px;top:149px;font-size:6.3px;line-height:7px;color:#3f7560;">2</span>
<span style="left:532.9px;top:149px;font-size:6.3px;line-height:7px;color:#3f7560;">2</span>
<span style="left:576.65px;top:149px;font-size:6.3px;line-height:7px;color:#3f7560;">2</span>
<span style="left:620.4px;top:149px;font-size:6.3px;line-height:7px;color:#3f7560;">2</span>
<span style="left:664.15px;top:149px;font-size:6.3px;line-height:7px;color:#3f7560;">2</span>
<span style="left:707.9px;top:149px;font-size:6.3px;line-height:7px;color:#3f7560;">2</span>
<span style="left:751.65px;top:149px;font-size:6.3px;line-height:7px;color:#3f7560;">2</span>
<span style="left:795.4px;top:149px;font-size:6.3px;line-height:7px;color:#3f7560;">2</span>
<span style="left:839.15px;top:149px;font-size:6.3px;line-height:7px;color:#3f7560;">2</span>
<span style="left:882.9px;top:149px;font-size:6.3px;line-height:7px;color:#3f7560;">2</span>
<span style="left:926.65px;top:149px;font-size:6.3px;line-height:7px;color:#3f7560;">2</span>
<span style="left:970.4px;top:149px;font-size:6.3px;line-height:7px;color:#3f7560;">2</span>
<span style="left:40.6px;top:161px;font-size:6.1px;line-height:7px;color:#3f7560;">HR Placeholder 4</span>
<span style="left:170.34px;top:161px;font-size:6.1px;line-height:7px;color:#3f7560;">50,000</span>
<span style="left:270.4px;top:162px;font-size:6.3px;line-height:7px;color:#3f7560;">3</span>
<span style="left:314.15px;top:162px;font-size:6.3px;line-height:7px;color:#3f7560;">3</span>
<span style="left:357.9px;top:162px;font-size:6.3px;line-height:7px;color:#3f7560;">3</span>
<span style="left:401.65px;top:162px;font-size:6.3px;line-height:7px;color:#3f7560;">3</span>
<span style="left:445.4px;top:162px;font-size:6.3px;line-height:7px;color:#3f7560;">3</span>
<span style="left:489.15px;top:162px;font-size:6.3px;line-height:7px;color:#3f7560;">3</span>
<span style="left:532.9px;top:162px;font-size:6.3px;line-height:7px;color:#3f7560;">3</span>
<span style="left:576.65px;top:162px;font-size:6.3px;line-height:7px;color:#3f7560;">3</span>
<span style="left:620.4px;top:162px;font-size:6.3px;line-height:7px;color:#3f7560;">3</span>
<span style="left:664.15px;top:162px;font-size:6.3px;line-height:7px;color:#3f7560;">3</span>
<span style="left:707.9px;top:162px;font-size:6.3px;line-height:7px;color:#3f7560;">3</span>
<span style="left:751.65px;top:162px;font-size:6.3px;line-height:7px;color:#3f7560;">3</span>
<span style="left:795.4px;top:162px;font-size:6.3px;line-height:7px;color:#3f7560;">3</span>
<span style="left:839.15px;top:162px;font-size:6.3px;line-height:7px;color:#3f7560;">3</span>
<span style="left:882.9px;top:162px;font-size:6.3px;line-height:7px;color:#3f7560;">3</span>
<span style="left:926.65px;top:162px;font-size:6.3px;line-height:7px;color:#3f7560;">3</span>
<span style="left:970.4px;top:162px;font-size:6.3px;line-height:7px;color:#3f7560;">3</span>
<span style="left:40.6px;top:174px;font-size:6.1px;line-height:7px;color:#3f7560;">HR Placeholder 5</span>
<span style="left:170.34px;top:174px;font-size:6.1px;line-height:7px;color:#3f7560;">70,000</span>
<span style="left:270.4px;top:174px;font-size:6.3px;line-height:7px;color:#3f7560;">4</span>
<span style="left:314.15px;top:174px;font-size:6.3px;line-height:7px;color:#3f7560;">4</span>
<span style="left:357.9px;top:174px;font-size:6.3px;line-height:7px;color:#3f7560;">4</span>
<span style="left:401.65px;top:174px;font-size:6.3px;line-height:7px;color:#3f7560;">4</span>
<span style="left:445.4px;top:174px;font-size:6.3px;line-height:7px;color:#3f7560;">4</span>
<span style="left:489.15px;top:174px;font-size:6.3px;line-height:7px;color:#3f7560;">4</span>
<span style="left:532.9px;top:174px;font-size:6.3px;line-height:7px;color:#3f7560;">4</span>
<span style="left:576.65px;top:174px;font-size:6.3px;line-height:7px;color:#3f7560;">4</span>
<span style="left:620.4px;top:174px;font-size:6.3px;line-height:7px;color:#3f7560;">4</span>
<span style="left:664.15px;top:174px;font-size:6.3px;line-height:7px;color:#3f7560;">4</span>
<span style="left:707.9px;top:174px;font-size:6.3px;line-height:7px;color:#3f7560;">4</span>
<span style="left:751.65px;top:174px;font-size:6.3px;line-height:7px;color:#3f7560;">4</span>
<span style="left:795.4px;top:174px;font-size:6.3px;line-height:7px;color:#3f7560;">4</span>
<span style="left:839.15px;top:174px;font-size:6.3px;line-height:7px;color:#3f7560;">4</span>
<span style="left:882.9px;top:174px;font-size:6.3px;line-height:7px;color:#3f7560;">4</span>
<span style="left:926.65px;top:174px;font-size:6.3px;line-height:7px;color:#3f7560;">4</span>
<span style="left:970.4px;top:174px;font-size:6.3px;line-height:7px;color:#3f7560;">4</span>
<span style="left:40.6px;top:186px;font-size:6.1px;line-height:7px;color:#3f7560;">HR Placeholder 6</span>
<span style="left:170.34px;top:186px;font-size:6.1px;line-height:7px;color:#3f7560;">55,000</span>
<span style="left:270.4px;top:187px;font-size:6.3px;line-height:7px;color:#3f7560;">5</span>
<span style="left:314.15px;top:187px;font-size:6.3px;line-height:7px;color:#3f7560;">5</span>
<span style="left:357.9px;top:187px;font-size:6.3px;line-height:7px;color:#3f7560;">5</span>
<span style="left:401.65px;top:187px;font-size:6.3px;line-height:7px;color:#3f7560;">5</span>
<span style="left:445.4px;top:187px;font-size:6.3px;line-height:7px;color:#3f7560;">5</span>
<span style="left:489.15px;top:187px;font-size:6.3px;line-height:7px;color:#3f7560;">5</span>
<span style="left:532.9px;top:187px;font-size:6.3px;line-height:7px;color:#3f7560;">5</span>
<span style="left:576.65px;top:187px;font-size:6.3px;line-height:7px;color:#3f7560;">5</span>
<span style="left:620.4px;top:187px;font-size:6.3px;line-height:7px;color:#3f7560;">5</span>
<span style="left:664.15px;top:187px;font-size:6.3px;line-height:7px;color:#3f7560;">5</span>
<span style="left:707.9px;top:187px;font-size:6.3px;line-height:7px;color:#3f7560;">5</span>
<span style="left:751.65px;top:187px;font-size:6.3px;line-height:7px;color:#3f7560;">5</span>
<span style="left:795.4px;top:187px;font-size:6.3px;line-height:7px;color:#3f7560;">5</span>
<span style="left:839.15px;top:187px;font-size:6.3px;line-height:7px;color:#3f7560;">5</span>
<span style="left:882.9px;top:187px;font-size:6.3px;line-height:7px;color:#3f7560;">5</span>
<span style="left:926.65px;top:187px;font-size:6.3px;line-height:7px;color:#3f7560;">5</span>
<span style="left:970.4px;top:187px;font-size:6.3px;line-height:7px;color:#3f7560;">5</span>
<span style="left:40.6px;top:199px;font-size:6.1px;line-height:7px;color:#3f7560;">HR Placeholder 7</span>
<span style="left:186.97px;top:199px;font-size:6.1px;line-height:7px;color:rgba(70,110,80,0.6);">-</span>
<span style="left:271.8px;top:199px;font-size:6.3px;line-height:7px;color:rgba(70,110,80,0.6);">-</span>
<span style="left:315.55px;top:199px;font-size:6.3px;line-height:7px;color:rgba(70,110,80,0.6);">-</span>
<span style="left:359.3px;top:199px;font-size:6.3px;line-height:7px;color:rgba(70,110,80,0.6);">-</span>
<span style="left:403.05px;top:199px;font-size:6.3px;line-height:7px;color:rgba(70,110,80,0.6);">-</span>
<span style="left:446.8px;top:199px;font-size:6.3px;line-height:7px;color:rgba(70,110,80,0.6);">-</span>
<span style="left:490.55px;top:199px;font-size:6.3px;line-height:7px;color:rgba(70,110,80,0.25);">-</span>
<span style="left:534.3px;top:199px;font-size:6.3px;line-height:7px;color:rgba(70,110,80,0.25);">-</span>
<span style="left:578.05px;top:199px;font-size:6.3px;line-height:7px;color:rgba(70,110,80,0.25);">-</span>
<span style="left:621.8px;top:199px;font-size:6.3px;line-height:7px;color:rgba(70,110,80,0.25);">-</span>
<span style="left:665.55px;top:199px;font-size:6.3px;line-height:7px;color:rgba(70,110,80,0.25);">-</span>
<span style="left:709.3px;top:199px;font-size:6.3px;line-height:7px;color:rgba(70,110,80,0.25);">-</span>
<span style="left:753.05px;top:199px;font-size:6.3px;line-height:7px;color:rgba(70,110,80,0.25);">-</span>
<span style="left:796.8px;top:199px;font-size:6.3px;line-height:7px;color:rgba(70,110,80,0.25);">-</span>
<span style="left:840.55px;top:199px;font-size:6.3px;line-height:7px;color:rgba(70,110,80,0.25);">-</span>
<span style="left:884.3px;top:199px;font-size:6.3px;line-height:7px;color:rgba(70,110,80,0.25);">-</span>
<span style="left:928.05px;top:199px;font-size:6.3px;line-height:7px;color:rgba(70,110,80,0.25);">-</span>
<span style="left:971.8px;top:199px;font-size:6.3px;line-height:7px;color:rgba(70,110,80,0.25);">-</span>
<span style="left:40.6px;top:211px;font-size:6.1px;line-height:7px;color:#3f7560;">HR Placeholder 8</span>
<span style="left:186.97px;top:211px;font-size:6.1px;line-height:7px;color:rgba(70,110,80,0.6);">-</span>
<span style="left:271.8px;top:212px;font-size:6.3px;line-height:7px;color:rgba(70,110,80,0.6);">-</span>
<span style="left:315.55px;top:212px;font-size:6.3px;line-height:7px;color:rgba(70,110,80,0.6);">-</span>
<span style="left:359.3px;top:212px;font-size:6.3px;line-height:7px;color:rgba(70,110,80,0.6);">-</span>
<span style="left:403.05px;top:212px;font-size:6.3px;line-height:7px;color:rgba(70,110,80,0.6);">-</span>
<span style="left:446.8px;top:212px;font-size:6.3px;line-height:7px;color:rgba(70,110,80,0.6);">-</span>
<span style="left:490.55px;top:212px;font-size:6.3px;line-height:7px;color:rgba(70,110,80,0.25);">-</span>
<span style="left:534.3px;top:212px;font-size:6.3px;line-height:7px;color:rgba(70,110,80,0.25);">-</span>
<span style="left:578.05px;top:212px;font-size:6.3px;line-height:7px;color:rgba(70,110,80,0.25);">-</span>
<span style="left:621.8px;top:212px;font-size:6.3px;line-height:7px;color:rgba(70,110,80,0.25);">-</span>
<span style="left:665.55px;top:212px;font-size:6.3px;line-height:7px;color:rgba(70,110,80,0.25);">-</span>
<span style="left:709.3px;top:212px;font-size:6.3px;line-height:7px;color:rgba(70,110,80,0.25);">-</span>
<span style="left:753.05px;top:212px;font-size:6.3px;line-height:7px;color:rgba(70,110,80,0.25);">-</span>
<span style="left:796.8px;top:212px;font-size:6.3px;line-height:7px;color:rgba(70,110,80,0.25);">-</span>
<span style="left:840.55px;top:212px;font-size:6.3px;line-height:7px;color:rgba(70,110,80,0.25);">-</span>
<span style="left:884.3px;top:212px;font-size:6.3px;line-height:7px;color:rgba(70,110,80,0.25);">-</span>
<span style="left:928.05px;top:212px;font-size:6.3px;line-height:7px;color:rgba(70,110,80,0.25);">-</span>
<span style="left:971.8px;top:212px;font-size:6.3px;line-height:7px;color:rgba(70,110,80,0.25);">-</span>
<span style="left:40.6px;top:224px;font-size:6.1px;line-height:7px;color:#3f7560;">HR Placeholder 9</span>
<span style="left:186.97px;top:224px;font-size:6.1px;line-height:7px;color:rgba(70,110,80,0.6);">-</span>
<span style="left:271.8px;top:224px;font-size:6.3px;line-height:7px;color:rgba(70,110,80,0.6);">-</span>
<span style="left:315.55px;top:224px;font-size:6.3px;line-height:7px;color:rgba(70,110,80,0.6);">-</span>
<span style="left:359.3px;top:224px;font-size:6.3px;line-height:7px;color:rgba(70,110,80,0.6);">-</span>
<span style="left:403.05px;top:224px;font-size:6.3px;line-height:7px;color:rgba(70,110,80,0.6);">-</span>
<span style="left:446.8px;top:224px;font-size:6.3px;line-height:7px;color:rgba(70,110,80,0.6);">-</span>
<span style="left:490.55px;top:224px;font-size:6.3px;line-height:7px;color:rgba(70,110,80,0.25);">-</span>
<span style="left:534.3px;top:224px;font-size:6.3px;line-height:7px;color:rgba(70,110,80,0.25);">-</span>
<span style="left:578.05px;top:224px;font-size:6.3px;line-height:7px;color:rgba(70,110,80,0.25);">-</span>
<span style="left:621.8px;top:224px;font-size:6.3px;line-height:7px;color:rgba(70,110,80,0.25);">-</span>
<span style="left:665.55px;top:224px;font-size:6.3px;line-height:7px;color:rgba(70,110,80,0.25);">-</span>
<span style="left:709.3px;top:224px;font-size:6.3px;line-height:7px;color:rgba(70,110,80,0.25);">-</span>
<span style="left:753.05px;top:224px;font-size:6.3px;line-height:7px;color:rgba(70,110,80,0.25);">-</span>
<span style="left:796.8px;top:224px;font-size:6.3px;line-height:7px;color:rgba(70,110,80,0.25);">-</span>
<span style="left:840.55px;top:224px;font-size:6.3px;line-height:7px;color:rgba(70,110,80,0.25);">-</span>
<span style="left:884.3px;top:224px;font-size:6.3px;line-height:7px;color:rgba(70,110,80,0.25);">-</span>
<span style="left:928.05px;top:224px;font-size:6.3px;line-height:7px;color:rgba(70,110,80,0.25);">-</span>
<span style="left:971.8px;top:224px;font-size:6.3px;line-height:7px;color:rgba(70,110,80,0.25);">-</span>
<span style="left:40.6px;top:236px;font-size:6.1px;line-height:7px;color:#3f7560;">HR Placeholder 10</span>
<span style="left:186.97px;top:236px;font-size:6.1px;line-height:7px;color:rgba(70,110,80,0.6);">-</span>
<span style="left:271.8px;top:237px;font-size:6.3px;line-height:7px;color:rgba(70,110,80,0.6);">-</span>
<span style="left:315.55px;top:237px;font-size:6.3px;line-height:7px;color:rgba(70,110,80,0.6);">-</span>
<span style="left:359.3px;top:237px;font-size:6.3px;line-height:7px;color:rgba(70,110,80,0.6);">-</span>
<span style="left:403.05px;top:237px;font-size:6.3px;line-height:7px;color:rgba(70,110,80,0.6);">-</span>
<span style="left:446.8px;top:237px;font-size:6.3px;line-height:7px;color:rgba(70,110,80,0.6);">-</span>
<span style="left:490.55px;top:237px;font-size:6.3px;line-height:7px;color:rgba(70,110,80,0.25);">-</span>
<span style="left:534.3px;top:237px;font-size:6.3px;line-height:7px;color:rgba(70,110,80,0.25);">-</span>
<span style="left:578.05px;top:237px;font-size:6.3px;line-height:7px;color:rgba(70,110,80,0.25);">-</span>
<span style="left:621.8px;top:237px;font-size:6.3px;line-height:7px;color:rgba(70,110,80,0.25);">-</span>
<span style="left:665.55px;top:237px;font-size:6.3px;line-height:7px;color:rgba(70,110,80,0.25);">-</span>
<span style="left:709.3px;top:237px;font-size:6.3px;line-height:7px;color:rgba(70,110,80,0.25);">-</span>
<span style="left:753.05px;top:237px;font-size:6.3px;line-height:7px;color:rgba(70,110,80,0.25);">-</span>
<span style="left:796.8px;top:237px;font-size:6.3px;line-height:7px;color:rgba(70,110,80,0.25);">-</span>
<span style="left:840.55px;top:237px;font-size:6.3px;line-height:7px;color:rgba(70,110,80,0.25);">-</span>
<span style="left:884.3px;top:237px;font-size:6.3px;line-height:7px;color:rgba(70,110,80,0.25);">-</span>
<span style="left:928.05px;top:237px;font-size:6.3px;line-height:7px;color:rgba(70,110,80,0.25);">-</span>
<span style="left:971.8px;top:237px;font-size:6.3px;line-height:7px;color:rgba(70,110,80,0.25);">-</span>
<span style="left:40.6px;top:249px;font-size:6.1px;line-height:7px;color:#3f7560;">HR Placeholder 11</span>
<span style="left:186.97px;top:249px;font-size:6.1px;line-height:7px;color:rgba(70,110,80,0.6);">-</span>
<span style="left:271.8px;top:249px;font-size:6.3px;line-height:7px;color:rgba(70,110,80,0.6);">-</span>
<span style="left:315.55px;top:249px;font-size:6.3px;line-height:7px;color:rgba(70,110,80,0.6);">-</span>
<span style="left:359.3px;top:249px;font-size:6.3px;line-height:7px;color:rgba(70,110,80,0.6);">-</span>
<span style="left:403.05px;top:249px;font-size:6.3px;line-height:7px;color:rgba(70,110,80,0.6);">-</span>
<span style="left:446.8px;top:249px;font-size:6.3px;line-height:7px;color:rgba(70,110,80,0.6);">-</span>
<span style="left:490.55px;top:249px;font-size:6.3px;line-height:7px;color:rgba(70,110,80,0.25);">-</span>
<span style="left:534.3px;top:249px;font-size:6.3px;line-height:7px;color:rgba(70,110,80,0.25);">-</span>
<span style="left:578.05px;top:249px;font-size:6.3px;line-height:7px;color:rgba(70,110,80,0.25);">-</span>
<span style="left:621.8px;top:249px;font-size:6.3px;line-height:7px;color:rgba(70,110,80,0.25);">-</span>
<span style="left:665.55px;top:249px;font-size:6.3px;line-height:7px;color:rgba(70,110,80,0.25);">-</span>
<span style="left:709.3px;top:249px;font-size:6.3px;line-height:7px;color:rgba(70,110,80,0.25);">-</span>
<span style="left:753.05px;top:249px;font-size:6.3px;line-height:7px;color:rgba(70,110,80,0.25);">-</span>
<span style="left:796.8px;top:249px;font-size:6.3px;line-height:7px;color:rgba(70,110,80,0.25);">-</span>
<span style="left:840.55px;top:249px;font-size:6.3px;line-height:7px;color:rgba(70,110,80,0.25);">-</span>
<span style="left:884.3px;top:249px;font-size:6.3px;line-height:7px;color:rgba(70,110,80,0.25);">-</span>
<span style="left:928.05px;top:249px;font-size:6.3px;line-height:7px;color:rgba(70,110,80,0.25);">-</span>
<span style="left:971.8px;top:249px;font-size:6.3px;line-height:7px;color:rgba(70,110,80,0.25);">-</span>
<span style="left:40.6px;top:261px;font-size:6.1px;line-height:7px;color:#3f7560;">HR Placeholder 12</span>
<span style="left:186.97px;top:261px;font-size:6.1px;line-height:7px;color:rgba(70,110,80,0.6);">-</span>
<span style="left:271.8px;top:262px;font-size:6.3px;line-height:7px;color:rgba(70,110,80,0.6);">-</span>
<span style="left:315.55px;top:262px;font-size:6.3px;line-height:7px;color:rgba(70,110,80,0.6);">-</span>
<span style="left:359.3px;top:262px;font-size:6.3px;line-height:7px;color:rgba(70,110,80,0.6);">-</span>
<span style="left:403.05px;top:262px;font-size:6.3px;line-height:7px;color:rgba(70,110,80,0.6);">-</span>
<span style="left:446.8px;top:262px;font-size:6.3px;line-height:7px;color:rgba(70,110,80,0.6);">-</span>
<span style="left:490.55px;top:262px;font-size:6.3px;line-height:7px;color:rgba(70,110,80,0.25);">-</span>
<span style="left:534.3px;top:262px;font-size:6.3px;line-height:7px;color:rgba(70,110,80,0.25);">-</span>
<span style="left:578.05px;top:262px;font-size:6.3px;line-height:7px;color:rgba(70,110,80,0.25);">-</span>
<span style="left:621.8px;top:262px;font-size:6.3px;line-height:7px;color:rgba(70,110,80,0.25);">-</span>
<span style="left:665.55px;top:262px;font-size:6.3px;line-height:7px;color:rgba(70,110,80,0.25);">-</span>
<span style="left:709.3px;top:262px;font-size:6.3px;line-height:7px;color:rgba(70,110,80,0.25);">-</span>
<span style="left:753.05px;top:262px;font-size:6.3px;line-height:7px;color:rgba(70,110,80,0.25);">-</span>
<span style="left:796.8px;top:262px;font-size:6.3px;line-height:7px;color:rgba(70,110,80,0.25);">-</span>
<span style="left:840.55px;top:262px;font-size:6.3px;line-height:7px;color:rgba(70,110,80,0.25);">-</span>
<span style="left:884.3px;top:262px;font-size:6.3px;line-height:7px;color:rgba(70,110,80,0.25);">-</span>
<span style="left:928.05px;top:262px;font-size:6.3px;line-height:7px;color:rgba(70,110,80,0.25);">-</span>
<span style="left:971.8px;top:262px;font-size:6.3px;line-height:7px;color:rgba(70,110,80,0.25);">-</span>
<span style="left:40.6px;top:274px;font-size:6.1px;line-height:7px;color:#3f7560;">HR Placeholder 13</span>
<span style="left:186.97px;top:274px;font-size:6.1px;line-height:7px;color:rgba(70,110,80,0.6);">-</span>
<span style="left:271.8px;top:274px;font-size:6.3px;line-height:7px;color:rgba(70,110,80,0.6);">-</span>
<span style="left:315.55px;top:274px;font-size:6.3px;line-height:7px;color:rgba(70,110,80,0.6);">-</span>
<span style="left:359.3px;top:274px;font-size:6.3px;line-height:7px;color:rgba(70,110,80,0.6);">-</span>
<span style="left:403.05px;top:274px;font-size:6.3px;line-height:7px;color:rgba(70,110,80,0.6);">-</span>
<span style="left:446.8px;top:274px;font-size:6.3px;line-height:7px;color:rgba(70,110,80,0.6);">-</span>
<span style="left:490.55px;top:274px;font-size:6.3px;line-height:7px;color:rgba(70,110,80,0.25);">-</span>
<span style="left:534.3px;top:274px;font-size:6.3px;line-height:7px;color:rgba(70,110,80,0.25);">-</span>
<span style="left:578.05px;top:274px;font-size:6.3px;line-height:7px;color:rgba(70,110,80,0.25);">-</span>
<span style="left:621.8px;top:274px;font-size:6.3px;line-height:7px;color:rgba(70,110,80,0.25);">-</span>
<span style="left:665.55px;top:274px;font-size:6.3px;line-height:7px;color:rgba(70,110,80,0.25);">-</span>
<span style="left:709.3px;top:274px;font-size:6.3px;line-height:7px;color:rgba(70,110,80,0.25);">-</span>
<span style="left:753.05px;top:274px;font-size:6.3px;line-height:7px;color:rgba(70,110,80,0.25);">-</span>
<span style="left:796.8px;top:274px;font-size:6.3px;line-height:7px;color:rgba(70,110,80,0.25);">-</span>
<span style="left:840.55px;top:274px;font-size:6.3px;line-height:7px;color:rgba(70,110,80,0.25);">-</span>
<span style="left:884.3px;top:274px;font-size:6.3px;line-height:7px;color:rgba(70,110,80,0.25);">-</span>
<span style="left:928.05px;top:274px;font-size:6.3px;line-height:7px;color:rgba(70,110,80,0.25);">-</span>
<span style="left:971.8px;top:274px;font-size:6.3px;line-height:7px;color:rgba(70,110,80,0.25);">-</span>
<span style="left:40.6px;top:286px;font-size:6.1px;line-height:7px;color:#3f7560;">HR Placeholder 14</span>
<span style="left:186.97px;top:286px;font-size:6.1px;line-height:7px;color:rgba(70,110,80,0.6);">-</span>
<span style="left:271.8px;top:287px;font-size:6.3px;line-height:7px;color:rgba(70,110,80,0.6);">-</span>
<span style="left:315.55px;top:287px;font-size:6.3px;line-height:7px;color:rgba(70,110,80,0.6);">-</span>
<span style="left:359.3px;top:287px;font-size:6.3px;line-height:7px;color:rgba(70,110,80,0.6);">-</span>
<span style="left:403.05px;top:287px;font-size:6.3px;line-height:7px;color:rgba(70,110,80,0.6);">-</span>
<span style="left:446.8px;top:287px;font-size:6.3px;line-height:7px;color:rgba(70,110,80,0.6);">-</span>
<span style="left:490.55px;top:287px;font-size:6.3px;line-height:7px;color:rgba(70,110,80,0.25);">-</span>
<span style="left:534.3px;top:287px;font-size:6.3px;line-height:7px;color:rgba(70,110,80,0.25);">-</span>
<span style="left:578.05px;top:287px;font-size:6.3px;line-height:7px;color:rgba(70,110,80,0.25);">-</span>
<span style="left:621.8px;top:287px;font-size:6.3px;line-height:7px;color:rgba(70,110,80,0.25);">-</span>
<span style="left:665.55px;top:287px;font-size:6.3px;line-height:7px;color:rgba(70,110,80,0.25);">-</span>
<span style="left:709.3px;top:287px;font-size:6.3px;line-height:7px;color:rgba(70,110,80,0.25);">-</span>
<span style="left:753.05px;top:287px;font-size:6.3px;line-height:7px;color:rgba(70,110,80,0.25);">-</span>
<span style="left:796.8px;top:287px;font-size:6.3px;line-height:7px;color:rgba(70,110,80,0.25);">-</span>
<span style="left:840.55px;top:287px;font-size:6.3px;line-height:7px;color:rgba(70,110,80,0.25);">-</span>
<span style="left:884.3px;top:287px;font-size:6.3px;line-height:7px;color:rgba(70,110,80,0.25);">-</span>
<span style="left:928.05px;top:287px;font-size:6.3px;line-height:7px;color:rgba(70,110,80,0.25);">-</span>
<span style="left:971.8px;top:287px;font-size:6.3px;line-height:7px;color:rgba(70,110,80,0.25);">-</span>
<span style="left:40.6px;top:299px;font-size:6.1px;line-height:7px;color:#3f7560;">HR Placeholder 15</span>
<span style="left:186.97px;top:299px;font-size:6.1px;line-height:7px;color:rgba(70,110,80,0.6);">-</span>
<span style="left:271.8px;top:299px;font-size:6.3px;line-height:7px;color:rgba(70,110,80,0.6);">-</span>
<span style="left:315.55px;top:299px;font-size:6.3px;line-height:7px;color:rgba(70,110,80,0.6);">-</span>
<span style="left:359.3px;top:299px;font-size:6.3px;line-height:7px;color:rgba(70,110,80,0.6);">-</span>
<span style="left:403.05px;top:299px;font-size:6.3px;line-height:7px;color:rgba(70,110,80,0.6);">-</span>
<span style="left:446.8px;top:299px;font-size:6.3px;line-height:7px;color:rgba(70,110,80,0.6);">-</span>
<span style="left:490.55px;top:299px;font-size:6.3px;line-height:7px;color:rgba(70,110,80,0.25);">-</span>
<span style="left:534.3px;top:299px;font-size:6.3px;line-height:7px;color:rgba(70,110,80,0.25);">-</span>
<span style="left:578.05px;top:299px;font-size:6.3px;line-height:7px;color:rgba(70,110,80,0.25);">-</span>
<span style="left:621.8px;top:299px;font-size:6.3px;line-height:7px;color:rgba(70,110,80,0.25);">-</span>
<span style="left:665.55px;top:299px;font-size:6.3px;line-height:7px;color:rgba(70,110,80,0.25);">-</span>
<span style="left:709.3px;top:299px;font-size:6.3px;line-height:7px;color:rgba(70,110,80,0.25);">-</span>
<span style="left:753.05px;top:299px;font-size:6.3px;line-height:7px;color:rgba(70,110,80,0.25);">-</span>
<span style="left:796.8px;top:299px;font-size:6.3px;line-height:7px;color:rgba(70,110,80,0.25);">-</span>
<span style="left:840.55px;top:299px;font-size:6.3px;line-height:7px;color:rgba(70,110,80,0.25);">-</span>
<span style="left:884.3px;top:299px;font-size:6.3px;line-height:7px;color:rgba(70,110,80,0.25);">-</span>
<span style="left:928.05px;top:299px;font-size:6.3px;line-height:7px;color:rgba(70,110,80,0.25);">-</span>
<span style="left:971.8px;top:299px;font-size:6.3px;line-height:7px;color:rgba(70,110,80,0.25);">-</span>
<span style="left:40.6px;top:311px;font-size:6.1px;line-height:7px;color:#3f7560;">HR Placeholder 16</span>
<span style="left:186.97px;top:311px;font-size:6.1px;line-height:7px;color:rgba(70,110,80,0.6);">-</span>
<span style="left:271.8px;top:312px;font-size:6.3px;line-height:7px;color:rgba(70,110,80,0.6);">-</span>
<span style="left:315.55px;top:312px;font-size:6.3px;line-height:7px;color:rgba(70,110,80,0.6);">-</span>
<span style="left:359.3px;top:312px;font-size:6.3px;line-height:7px;color:rgba(70,110,80,0.6);">-</span>
<span style="left:403.05px;top:312px;font-size:6.3px;line-height:7px;color:rgba(70,110,80,0.6);">-</span>
<span style="left:446.8px;top:312px;font-size:6.3px;line-height:7px;color:rgba(70,110,80,0.6);">-</span>
<span style="left:490.55px;top:312px;font-size:6.3px;line-height:7px;color:rgba(70,110,80,0.25);">-</span>
<span style="left:534.3px;top:312px;font-size:6.3px;line-height:7px;color:rgba(70,110,80,0.25);">-</span>
<span style="left:578.05px;top:312px;font-size:6.3px;line-height:7px;color:rgba(70,110,80,0.25);">-</span>
<span style="left:621.8px;top:312px;font-size:6.3px;line-height:7px;color:rgba(70,110,80,0.25);">-</span>
<span style="left:665.55px;top:312px;font-size:6.3px;line-height:7px;color:rgba(70,110,80,0.25);">-</span>
<span style="left:709.3px;top:312px;font-size:6.3px;line-height:7px;color:rgba(70,110,80,0.25);">-</span>
<span style="left:753.05px;top:312px;font-size:6.3px;line-height:7px;color:rgba(70,110,80,0.25);">-</span>
<span style="left:796.8px;top:312px;font-size:6.3px;line-height:7px;color:rgba(70,110,80,0.25);">-</span>
<span style="left:840.55px;top:312px;font-size:6.3px;line-height:7px;color:rgba(70,110,80,0.25);">-</span>
<span style="left:884.3px;top:312px;font-size:6.3px;line-height:7px;color:rgba(70,110,80,0.25);">-</span>
<span style="left:928.05px;top:312px;font-size:6.3px;line-height:7px;color:rgba(70,110,80,0.25);">-</span>
<span style="left:971.8px;top:312px;font-size:6.3px;line-height:7px;color:rgba(70,110,80,0.25);">-</span>
<span style="left:40.6px;top:324px;font-size:6.1px;line-height:7px;color:#3f7560;">HR Placeholder 17</span>
<span style="left:186.97px;top:324px;font-size:6.1px;line-height:7px;color:rgba(70,110,80,0.6);">-</span>
<span style="left:271.8px;top:324px;font-size:6.3px;line-height:7px;color:rgba(70,110,80,0.6);">-</span>
<span style="left:315.55px;top:324px;font-size:6.3px;line-height:7px;color:rgba(70,110,80,0.6);">-</span>
<span style="left:359.3px;top:324px;font-size:6.3px;line-height:7px;color:rgba(70,110,80,0.6);">-</span>
<span style="left:403.05px;top:324px;font-size:6.3px;line-height:7px;color:rgba(70,110,80,0.6);">-</span>
<span style="left:446.8px;top:324px;font-size:6.3px;line-height:7px;color:rgba(70,110,80,0.6);">-</span>
<span style="left:490.55px;top:324px;font-size:6.3px;line-height:7px;color:rgba(70,110,80,0.25);">-</span>
<span style="left:534.3px;top:324px;font-size:6.3px;line-height:7px;color:rgba(70,110,80,0.25);">-</span>
<span style="left:578.05px;top:324px;font-size:6.3px;line-height:7px;color:rgba(70,110,80,0.25);">-</span>
<span style="left:621.8px;top:324px;font-size:6.3px;line-height:7px;color:rgba(70,110,80,0.25);">-</span>
<span style="left:665.55px;top:324px;font-size:6.3px;line-height:7px;color:rgba(70,110,80,0.25);">-</span>
<span style="left:709.3px;top:324px;font-size:6.3px;line-height:7px;color:rgba(70,110,80,0.25);">-</span>
<span style="left:753.05px;top:324px;font-size:6.3px;line-height:7px;color:rgba(70,110,80,0.25);">-</span>
<span style="left:796.8px;top:324px;font-size:6.3px;line-height:7px;color:rgba(70,110,80,0.25);">-</span>
<span style="left:840.55px;top:324px;font-size:6.3px;line-height:7px;color:rgba(70,110,80,0.25);">-</span>
<span style="left:884.3px;top:324px;font-size:6.3px;line-height:7px;color:rgba(70,110,80,0.25);">-</span>
<span style="left:928.05px;top:324px;font-size:6.3px;line-height:7px;color:rgba(70,110,80,0.25);">-</span>
<span style="left:971.8px;top:324px;font-size:6.3px;line-height:7px;color:rgba(70,110,80,0.25);">-</span>
<span style="left:40.6px;top:336px;font-size:6.1px;line-height:7px;color:#3f7560;">HR Placeholder 18</span>
<span style="left:186.97px;top:336px;font-size:6.1px;line-height:7px;color:rgba(70,110,80,0.6);">-</span>
<span style="left:271.8px;top:337px;font-size:6.3px;line-height:7px;color:rgba(70,110,80,0.6);">-</span>
<span style="left:315.55px;top:337px;font-size:6.3px;line-height:7px;color:rgba(70,110,80,0.6);">-</span>
<span style="left:359.3px;top:337px;font-size:6.3px;line-height:7px;color:rgba(70,110,80,0.6);">-</span>
<span style="left:403.05px;top:337px;font-size:6.3px;line-height:7px;color:rgba(70,110,80,0.6);">-</span>
<span style="left:446.8px;top:337px;font-size:6.3px;line-height:7px;color:rgba(70,110,80,0.6);">-</span>
<span style="left:490.55px;top:337px;font-size:6.3px;line-height:7px;color:rgba(70,110,80,0.25);">-</span>
<span style="left:534.3px;top:337px;font-size:6.3px;line-height:7px;color:rgba(70,110,80,0.25);">-</span>
<span style="left:578.05px;top:337px;font-size:6.3px;line-height:7px;color:rgba(70,110,80,0.25);">-</span>
<span style="left:621.8px;top:337px;font-size:6.3px;line-height:7px;color:rgba(70,110,80,0.25);">-</span>
<span style="left:665.55px;top:337px;font-size:6.3px;line-height:7px;color:rgba(70,110,80,0.25);">-</span>
<span style="left:709.3px;top:337px;font-size:6.3px;line-height:7px;color:rgba(70,110,80,0.25);">-</span>
<span style="left:753.05px;top:337px;font-size:6.3px;line-height:7px;color:rgba(70,110,80,0.25);">-</span>
<span style="left:796.8px;top:337px;font-size:6.3px;line-height:7px;color:rgba(70,110,80,0.25);">-</span>
<span style="left:840.55px;top:337px;font-size:6.3px;line-height:7px;color:rgba(70,110,80,0.25);">-</span>
<span style="left:884.3px;top:337px;font-size:6.3px;line-height:7px;color:rgba(70,110,80,0.25);">-</span>
<span style="left:928.05px;top:337px;font-size:6.3px;line-height:7px;color:rgba(70,110,80,0.25);">-</span>
<span style="left:971.8px;top:337px;font-size:6.3px;line-height:7px;color:rgba(70,110,80,0.25);">-</span>
<span style="left:40.8px;top:349px;font-size:6.3px;line-height:7px;color:#1b62a8;letter-spacing:-0.19px;font-weight:bold;">Total Staff</span>
<span style="left:42.6px;top:421px;font-size:6.1px;line-height:7px;color:#3f7560;">HR Placeholder 1</span>
<span class="h" style="left:251.58px;top:422px;font-size:6.45px;line-height:7px;color:#3a70ab;">(35,000)</span>
<span class="h" style="left:295.33px;top:422px;font-size:6.45px;line-height:7px;color:#3a70ab;">(35,750)</span>
<span class="h" style="left:339.08px;top:422px;font-size:6.45px;line-height:7px;color:#3a70ab;">(38,588)</span>
<span class="h" style="left:382.83px;top:422px;font-size:6.45px;line-height:7px;color:#3a70ab;">(40,517)</span>
<span class="h" style="left:426.58px;top:422px;font-size:6.45px;line-height:7px;color:#3a70ab;">(42,543)</span>
<span class="h" style="left:470.33px;top:422px;font-size:6.45px;line-height:7px;color:#3a70ab;">(44,670)</span>
<span class="h" style="left:514.08px;top:422px;font-size:6.45px;line-height:7px;color:#3a70ab;">(46,903)</span>
<span class="h" style="left:557.83px;top:422px;font-size:6.45px;line-height:7px;color:#3a70ab;">(49,249)</span>
<span class="h" style="left:602.05px;top:422px;font-size:6.45px;line-height:7px;color:#3a70ab;">(51,711)</span>
<span class="h" style="left:645.33px;top:422px;font-size:6.45px;line-height:7px;color:#3a70ab;">(54,296)</span>
<span class="h" style="left:689.08px;top:422px;font-size:6.45px;line-height:7px;color:#3a70ab;">(54,296)</span>
<span class="h" style="left:732.83px;top:422px;font-size:6.45px;line-height:7px;color:#3a70ab;">(55,382)</span>
<span class="h" style="left:776.58px;top:422px;font-size:6.45px;line-height:7px;color:#3a70ab;">(55,382)</span>
<span class="h" style="left:820.33px;top:422px;font-size:6.45px;line-height:7px;color:#3a70ab;">(60,921)</span>
<span class="h" style="left:864.08px;top:422px;font-size:6.45px;line-height:7px;color:#3a70ab;">(60,921)</span>
<span class="h" style="left:907.83px;top:422px;font-size:6.45px;line-height:7px;color:#3a70ab;">(60,921)</span>
<span class="h" style="left:951.58px;top:422px;font-size:6.45px;line-height:7px;color:#3a70ab;">(60,921)</span>
<span style="left:42.6px;top:434px;font-size:6.1px;line-height:7px;color:#3f7560;">HR Placeholder 2</span>
<span class="h" style="left:251.58px;top:434px;font-size:6.45px;line-height:7px;color:#3a70ab;">(50,000)</span>
<span class="h" style="left:295.33px;top:434px;font-size:6.45px;line-height:7px;color:#3a70ab;">(50,500)</span>
<span class="h" style="left:339.08px;top:434px;font-size:6.45px;line-height:7px;color:#3a70ab;">(51,005)</span>
<span class="h" style="left:382.83px;top:434px;font-size:6.45px;line-height:7px;color:#3a70ab;">(51,515)</span>
<span class="h" style="left:426.58px;top:434px;font-size:6.45px;line-height:7px;color:#3a70ab;">(52,030)</span>
<span class="h" style="left:470.33px;top:434px;font-size:6.45px;line-height:7px;color:#3a70ab;">(54,632)</span>
<span class="h" style="left:514.08px;top:434px;font-size:6.45px;line-height:7px;color:#3a70ab;">(55,178)</span>
<span class="h" style="left:557.83px;top:434px;font-size:6.45px;line-height:7px;color:#3a70ab;">(55,730)</span>
<span class="h" style="left:601.58px;top:434px;font-size:6.45px;line-height:7px;color:#3a70ab;">(56,287)</span>
<span class="h" style="left:645.33px;top:434px;font-size:6.45px;line-height:7px;color:#3a70ab;">(56,850)</span>
<span class="h" style="left:689.08px;top:434px;font-size:6.45px;line-height:7px;color:#3a70ab;">(56,850)</span>
<span class="h" style="left:732.83px;top:434px;font-size:6.45px;line-height:7px;color:#3a70ab;">(57,987)</span>
<span class="h" style="left:776.58px;top:434px;font-size:6.45px;line-height:7px;color:#3a70ab;">(57,987)</span>
<span class="h" style="left:820.33px;top:434px;font-size:6.45px;line-height:7px;color:#3a70ab;">(63,786)</span>
<span class="h" style="left:864.08px;top:434px;font-size:6.45px;line-height:7px;color:#3a70ab;">(63,786)</span>
<span class="h" style="left:907.83px;top:434px;font-size:6.45px;line-height:7px;color:#3a70ab;">(63,786)</span>
<span class="h" style="left:951.58px;top:434px;font-size:6.45px;line-height:7px;color:#3a70ab;">(63,786)</span>
<span style="left:42.6px;top:446px;font-size:6.1px;line-height:7px;color:#3f7560;">HR Placeholder 3</span>
<span class="h" style="left:251.58px;top:447px;font-size:6.45px;line-height:7px;color:#3a70ab;">(35,000)</span>
<span class="h" style="left:295.33px;top:447px;font-size:6.45px;line-height:7px;color:#3a70ab;">(35,350)</span>
<span class="h" style="left:339.08px;top:447px;font-size:6.45px;line-height:7px;color:#3a70ab;">(35,704)</span>
<span class="h" style="left:382.83px;top:447px;font-size:6.45px;line-height:7px;color:#3a70ab;">(36,061)</span>
<span class="h" style="left:426.58px;top:447px;font-size:6.45px;line-height:7px;color:#3a70ab;">(36,421)</span>
<span class="h" style="left:470.33px;top:447px;font-size:6.45px;line-height:7px;color:#3a70ab;">(38,242)</span>
<span class="h" style="left:514.08px;top:447px;font-size:6.45px;line-height:7px;color:#3a70ab;">(38,625)</span>
<span class="h" style="left:558.3px;top:447px;font-size:6.45px;line-height:7px;color:#3a70ab;">(39,011)</span>
<span class="h" style="left:601.58px;top:447px;font-size:6.45px;line-height:7px;color:#3a70ab;">(39,401)</span>
<span class="h" style="left:645.33px;top:447px;font-size:6.45px;line-height:7px;color:#3a70ab;">(39,795)</span>
<span class="h" style="left:689.08px;top:447px;font-size:6.45px;line-height:7px;color:#3a70ab;">(39,795)</span>
<span class="h" style="left:732.83px;top:447px;font-size:6.45px;line-height:7px;color:#3a70ab;">(40,591)</span>
<span class="h" style="left:776.58px;top:447px;font-size:6.45px;line-height:7px;color:#3a70ab;">(40,591)</span>
<span class="h" style="left:820.33px;top:447px;font-size:6.45px;line-height:7px;color:#3a70ab;">(44,650)</span>
<span class="h" style="left:864.08px;top:447px;font-size:6.45px;line-height:7px;color:#3a70ab;">(44,650)</span>
<span class="h" style="left:907.83px;top:447px;font-size:6.45px;line-height:7px;color:#3a70ab;">(44,650)</span>
<span class="h" style="left:951.58px;top:447px;font-size:6.45px;line-height:7px;color:#3a70ab;">(44,650)</span>
<span style="left:42.6px;top:459px;font-size:6.1px;line-height:7px;color:#3f7560;">HR Placeholder 4</span>
<span class="h" style="left:251.58px;top:459px;font-size:6.45px;line-height:7px;color:#3a70ab;">(50,000)</span>
<span class="h" style="left:295.33px;top:459px;font-size:6.45px;line-height:7px;color:#3a70ab;">(50,500)</span>
<span class="h" style="left:339.08px;top:459px;font-size:6.45px;line-height:7px;color:#3a70ab;">(51,005)</span>
<span class="h" style="left:382.83px;top:459px;font-size:6.45px;line-height:7px;color:#3a70ab;">(51,515)</span>
<span class="h" style="left:426.58px;top:459px;font-size:6.45px;line-height:7px;color:#3a70ab;">(52,030)</span>
<span class="h" style="left:470.33px;top:459px;font-size:6.45px;line-height:7px;color:#3a70ab;">(54,632)</span>
<span class="h" style="left:514.08px;top:459px;font-size:6.45px;line-height:7px;color:#3a70ab;">(55,178)</span>
<span class="h" style="left:557.83px;top:459px;font-size:6.45px;line-height:7px;color:#3a70ab;">(55,730)</span>
<span class="h" style="left:601.58px;top:459px;font-size:6.45px;line-height:7px;color:#3a70ab;">(56,287)</span>
<span class="h" style="left:645.33px;top:459px;font-size:6.45px;line-height:7px;color:#3a70ab;">(56,850)</span>
<span class="h" style="left:689.08px;top:459px;font-size:6.45px;line-height:7px;color:#3a70ab;">(56,850)</span>
<span class="h" style="left:732.83px;top:459px;font-size:6.45px;line-height:7px;color:#3a70ab;">(57,987)</span>
<span class="h" style="left:776.58px;top:459px;font-size:6.45px;line-height:7px;color:#3a70ab;">(57,987)</span>
<span class="h" style="left:820.33px;top:459px;font-size:6.45px;line-height:7px;color:#3a70ab;">(63,786)</span>
<span class="h" style="left:864.08px;top:459px;font-size:6.45px;line-height:7px;color:#3a70ab;">(63,786)</span>
<span class="h" style="left:907.83px;top:459px;font-size:6.45px;line-height:7px;color:#3a70ab;">(63,786)</span>
<span class="h" style="left:951.58px;top:459px;font-size:6.45px;line-height:7px;color:#3a70ab;">(63,786)</span>
<span style="left:42.6px;top:471px;font-size:6.1px;line-height:7px;color:#3f7560;">HR Placeholder 5</span>
<span class="h" style="left:251.58px;top:472px;font-size:6.45px;line-height:7px;color:#3a70ab;">(70,000)</span>
<span class="h" style="left:295.33px;top:472px;font-size:6.45px;line-height:7px;color:#3a70ab;">(70,700)</span>
<span class="h" style="left:339.08px;top:472px;font-size:6.45px;line-height:7px;color:#3a70ab;">(71,407)</span>
<span class="h" style="left:382.83px;top:472px;font-size:6.45px;line-height:7px;color:#3a70ab;">(72,121)</span>
<span class="h" style="left:426.58px;top:472px;font-size:6.45px;line-height:7px;color:#3a70ab;">(72,842)</span>
<span class="h" style="left:470.33px;top:472px;font-size:6.45px;line-height:7px;color:#3a70ab;">(76,484)</span>
<span class="h" style="left:514.08px;top:472px;font-size:6.45px;line-height:7px;color:#3a70ab;">(77,249)</span>
<span class="h" style="left:557.83px;top:472px;font-size:6.45px;line-height:7px;color:#3a70ab;">(78,021)</span>
<span class="h" style="left:601.58px;top:472px;font-size:6.45px;line-height:7px;color:#3a70ab;">(78,802)</span>
<span class="h" style="left:645.33px;top:472px;font-size:6.45px;line-height:7px;color:#3a70ab;">(79,590)</span>
<span class="h" style="left:689.08px;top:472px;font-size:6.45px;line-height:7px;color:#3a70ab;">(79,590)</span>
<span class="h" style="left:732.83px;top:472px;font-size:6.45px;line-height:7px;color:#3a70ab;">(81,181)</span>
<span class="h" style="left:776.58px;top:472px;font-size:6.45px;line-height:7px;color:#3a70ab;">(81,181)</span>
<span class="h" style="left:820.33px;top:472px;font-size:6.45px;line-height:7px;color:#3a70ab;">(89,300)</span>
<span class="h" style="left:864.08px;top:472px;font-size:6.45px;line-height:7px;color:#3a70ab;">(89,300)</span>
<span class="h" style="left:907.83px;top:472px;font-size:6.45px;line-height:7px;color:#3a70ab;">(89,300)</span>
<span class="h" style="left:951.58px;top:472px;font-size:6.45px;line-height:7px;color:#3a70ab;">(89,300)</span>
<span style="left:42.6px;top:484px;font-size:6.1px;line-height:7px;color:#3f7560;">HR Placeholder 6</span>
<span class="h" style="left:251.58px;top:484px;font-size:6.45px;line-height:7px;color:#3a70ab;">(35,000)</span>
<span class="h" style="left:295.33px;top:484px;font-size:6.45px;line-height:7px;color:#3a70ab;">(35,350)</span>
<span class="h" style="left:339.08px;top:484px;font-size:6.45px;line-height:7px;color:#3a70ab;">(35,704)</span>
<span class="h" style="left:382.83px;top:484px;font-size:6.45px;line-height:7px;color:#3a70ab;">(36,061)</span>
<span class="h" style="left:426.58px;top:484px;font-size:6.45px;line-height:7px;color:#3a70ab;">(36,421)</span>
<span class="h" style="left:470.33px;top:484px;font-size:6.45px;line-height:7px;color:#3a70ab;">(38,242)</span>
<span class="h" style="left:514.08px;top:484px;font-size:6.45px;line-height:7px;color:#3a70ab;">(38,625)</span>
<span class="h" style="left:558.3px;top:484px;font-size:6.45px;line-height:7px;color:#3a70ab;">(39,011)</span>
<span class="h" style="left:601.58px;top:484px;font-size:6.45px;line-height:7px;color:#3a70ab;">(39,401)</span>
<span class="h" style="left:645.33px;top:484px;font-size:6.45px;line-height:7px;color:#3a70ab;">(39,795)</span>
<span class="h" style="left:689.08px;top:484px;font-size:6.45px;line-height:7px;color:#3a70ab;">(39,795)</span>
<span class="h" style="left:732.83px;top:484px;font-size:6.45px;line-height:7px;color:#3a70ab;">(40,591)</span>
<span class="h" style="left:776.58px;top:484px;font-size:6.45px;line-height:7px;color:#3a70ab;">(40,591)</span>
<span class="h" style="left:820.33px;top:484px;font-size:6.45px;line-height:7px;color:#3a70ab;">(44,650)</span>
<span class="h" style="left:864.08px;top:484px;font-size:6.45px;line-height:7px;color:#3a70ab;">(44,650)</span>
<span class="h" style="left:907.83px;top:484px;font-size:6.45px;line-height:7px;color:#3a70ab;">(44,650)</span>
<span class="h" style="left:951.58px;top:484px;font-size:6.45px;line-height:7px;color:#3a70ab;">(44,650)</span>
<span style="left:42.6px;top:496px;font-size:6.1px;line-height:7px;color:#3f7560;">HR Placeholder 7</span>
<span style="left:272.67px;top:496px;font-size:6.1px;line-height:7px;color:#8a8a8a;">-</span>
<span style="left:316.42px;top:496px;font-size:6.1px;line-height:7px;color:#8a8a8a;">-</span>
<span style="left:360.17px;top:496px;font-size:6.1px;line-height:7px;color:#8a8a8a;">-</span>
<span style="left:403.92px;top:496px;font-size:6.1px;line-height:7px;color:#8a8a8a;">-</span>
<span style="left:447.67px;top:496px;font-size:6.1px;line-height:7px;color:#8a8a8a;">-</span>
<span style="left:491.42px;top:496px;font-size:6.1px;line-height:7px;color:#8a8a8a;">-</span>
<span style="left:535.17px;top:496px;font-size:6.1px;line-height:7px;color:#8a8a8a;">-</span>
<span style="left:578.92px;top:496px;font-size:6.1px;line-height:7px;color:#8a8a8a;">-</span>
<span style="left:622.67px;top:496px;font-size:6.1px;line-height:7px;color:#8a8a8a;">-</span>
<span style="left:666.42px;top:496px;font-size:6.1px;line-height:7px;color:#8a8a8a;">-</span>
<span style="left:710.17px;top:496px;font-size:6.1px;line-height:7px;color:#8a8a8a;">-</span>
<span style="left:753.92px;top:496px;font-size:6.1px;line-height:7px;color:#8a8a8a;">-</span>
<span style="left:797.67px;top:496px;font-size:6.1px;line-height:7px;color:#8a8a8a;">-</span>
<span style="left:841.42px;top:496px;font-size:6.1px;line-height:7px;color:#8a8a8a;">-</span>
<span style="left:885.17px;top:496px;font-size:6.1px;line-height:7px;color:#8a8a8a;">-</span>
<span style="left:928.92px;top:496px;font-size:6.1px;line-height:7px;color:#8a8a8a;">-</span>
<span style="left:972.67px;top:496px;font-size:6.1px;line-height:7px;color:#8a8a8a;">-</span>
<span style="left:42.6px;top:509px;font-size:6.1px;line-height:7px;color:#3f7560;">HR Placeholder 8</span>
<span style="left:272.67px;top:509px;font-size:6.1px;line-height:7px;color:#8a8a8a;">-</span>
<span style="left:316.42px;top:509px;font-size:6.1px;line-height:7px;color:#8a8a8a;">-</span>
<span style="left:360.17px;top:509px;font-size:6.1px;line-height:7px;color:#8a8a8a;">-</span>
<span style="left:403.92px;top:509px;font-size:6.1px;line-height:7px;color:#8a8a8a;">-</span>
<span style="left:447.67px;top:509px;font-size:6.1px;line-height:7px;color:#8a8a8a;">-</span>
<span style="left:491.42px;top:509px;font-size:6.1px;line-height:7px;color:#8a8a8a;">-</span>
<span style="left:535.17px;top:509px;font-size:6.1px;line-height:7px;color:#8a8a8a;">-</span>
<span style="left:578.92px;top:509px;font-size:6.1px;line-height:7px;color:#8a8a8a;">-</span>
<span style="left:622.67px;top:509px;font-size:6.1px;line-height:7px;color:#8a8a8a;">-</span>
<span style="left:666.42px;top:509px;font-size:6.1px;line-height:7px;color:#8a8a8a;">-</span>
<span style="left:710.17px;top:509px;font-size:6.1px;line-height:7px;color:#8a8a8a;">-</span>
<span style="left:753.92px;top:509px;font-size:6.1px;line-height:7px;color:#8a8a8a;">-</span>
<span style="left:797.67px;top:509px;font-size:6.1px;line-height:7px;color:#8a8a8a;">-</span>
<span style="left:841.42px;top:509px;font-size:6.1px;line-height:7px;color:#8a8a8a;">-</span>
<span style="left:885.17px;top:509px;font-size:6.1px;line-height:7px;color:#8a8a8a;">-</span>
<span style="left:928.92px;top:509px;font-size:6.1px;line-height:7px;color:#8a8a8a;">-</span>
<span style="left:972.67px;top:509px;font-size:6.1px;line-height:7px;color:#8a8a8a;">-</span>
<span style="left:42.6px;top:521px;font-size:6.1px;line-height:7px;color:#3f7560;">HR Placeholder 9</span>
<span style="left:272.67px;top:521px;font-size:6.1px;line-height:7px;color:#8a8a8a;">-</span>
<span style="left:316.42px;top:521px;font-size:6.1px;line-height:7px;color:#8a8a8a;">-</span>
<span style="left:360.17px;top:521px;font-size:6.1px;line-height:7px;color:#8a8a8a;">-</span>
<span style="left:403.92px;top:521px;font-size:6.1px;line-height:7px;color:#8a8a8a;">-</span>
<span style="left:447.67px;top:521px;font-size:6.1px;line-height:7px;color:#8a8a8a;">-</span>
<span style="left:491.42px;top:521px;font-size:6.1px;line-height:7px;color:#8a8a8a;">-</span>
<span style="left:535.17px;top:521px;font-size:6.1px;line-height:7px;color:#8a8a8a;">-</span>
<span style="left:578.92px;top:521px;font-size:6.1px;line-height:7px;color:#8a8a8a;">-</span>
<span style="left:622.67px;top:521px;font-size:6.1px;line-height:7px;color:#8a8a8a;">-</span>
<span style="left:666.42px;top:521px;font-size:6.1px;line-height:7px;color:#8a8a8a;">-</span>
<span style="left:710.17px;top:521px;font-size:6.1px;line-height:7px;color:#8a8a8a;">-</span>
<span style="left:753.92px;top:521px;font-size:6.1px;line-height:7px;color:#8a8a8a;">-</span>
<span style="left:797.67px;top:521px;font-size:6.1px;line-height:7px;color:#8a8a8a;">-</span>
<span style="left:841.42px;top:521px;font-size:6.1px;line-height:7px;color:#8a8a8a;">-</span>
<span style="left:885.17px;top:521px;font-size:6.1px;line-height:7px;color:#8a8a8a;">-</span>
<span style="left:928.92px;top:521px;font-size:6.1px;line-height:7px;color:#8a8a8a;">-</span>
<span style="left:972.67px;top:521px;font-size:6.1px;line-height:7px;color:#8a8a8a;">-</span>
<span style="left:42.6px;top:534px;font-size:6.1px;line-height:7px;color:#3f7560;">HR Placeholder 10</span>
<span style="left:272.67px;top:534px;font-size:6.1px;line-height:7px;color:#8a8a8a;">-</span>
<span style="left:316.42px;top:534px;font-size:6.1px;line-height:7px;color:#8a8a8a;">-</span>
<span style="left:360.17px;top:534px;font-size:6.1px;line-height:7px;color:#8a8a8a;">-</span>
<span style="left:403.92px;top:534px;font-size:6.1px;line-height:7px;color:#8a8a8a;">-</span>
<span style="left:447.67px;top:534px;font-size:6.1px;line-height:7px;color:#8a8a8a;">-</span>
<span style="left:491.42px;top:534px;font-size:6.1px;line-height:7px;color:#8a8a8a;">-</span>
<span style="left:535.17px;top:534px;font-size:6.1px;line-height:7px;color:#8a8a8a;">-</span>
<span style="left:578.92px;top:534px;font-size:6.1px;line-height:7px;color:#8a8a8a;">-</span>
<span style="left:622.67px;top:534px;font-size:6.1px;line-height:7px;color:#8a8a8a;">-</span>
<span style="left:666.42px;top:534px;font-size:6.1px;line-height:7px;color:#8a8a8a;">-</span>
<span style="left:710.17px;top:534px;font-size:6.1px;line-height:7px;color:#8a8a8a;">-</span>
<span style="left:753.92px;top:534px;font-size:6.1px;line-height:7px;color:#8a8a8a;">-</span>
<span style="left:797.67px;top:534px;font-size:6.1px;line-height:7px;color:#8a8a8a;">-</span>
<span style="left:841.42px;top:534px;font-size:6.1px;line-height:7px;color:#8a8a8a;">-</span>
<span style="left:885.17px;top:534px;font-size:6.1px;line-height:7px;color:#8a8a8a;">-</span>
<span style="left:928.92px;top:534px;font-size:6.1px;line-height:7px;color:#8a8a8a;">-</span>
<span style="left:972.67px;top:534px;font-size:6.1px;line-height:7px;color:#8a8a8a;">-</span>
<span style="left:42.6px;top:546px;font-size:6.1px;line-height:7px;color:#3f7560;">HR Placeholder 11</span>
<span style="left:272.67px;top:546px;font-size:6.1px;line-height:7px;color:#8a8a8a;">-</span>
<span style="left:316.42px;top:546px;font-size:6.1px;line-height:7px;color:#8a8a8a;">-</span>
<span style="left:360.17px;top:546px;font-size:6.1px;line-height:7px;color:#8a8a8a;">-</span>
<span style="left:403.92px;top:546px;font-size:6.1px;line-height:7px;color:#8a8a8a;">-</span>
<span style="left:447.67px;top:546px;font-size:6.1px;line-height:7px;color:#8a8a8a;">-</span>
<span style="left:491.42px;top:546px;font-size:6.1px;line-height:7px;color:#8a8a8a;">-</span>
<span style="left:535.17px;top:546px;font-size:6.1px;line-height:7px;color:#8a8a8a;">-</span>
<span style="left:578.92px;top:546px;font-size:6.1px;line-height:7px;color:#8a8a8a;">-</span>
<span style="left:622.67px;top:546px;font-size:6.1px;line-height:7px;color:#8a8a8a;">-</span>
<span style="left:666.42px;top:546px;font-size:6.1px;line-height:7px;color:#8a8a8a;">-</span>
<span style="left:710.17px;top:546px;font-size:6.1px;line-height:7px;color:#8a8a8a;">-</span>
<span style="left:753.92px;top:546px;font-size:6.1px;line-height:7px;color:#8a8a8a;">-</span>
<span style="left:797.67px;top:546px;font-size:6.1px;line-height:7px;color:#8a8a8a;">-</span>
<span style="left:841.42px;top:546px;font-size:6.1px;line-height:7px;color:#8a8a8a;">-</span>
<span style="left:885.17px;top:546px;font-size:6.1px;line-height:7px;color:#8a8a8a;">-</span>
<span style="left:928.92px;top:546px;font-size:6.1px;line-height:7px;color:#8a8a8a;">-</span>
<span style="left:972.67px;top:546px;font-size:6.1px;line-height:7px;color:#8a8a8a;">-</span>
<div style="left:987.3px;top:50.6px;width:12.7px;height:508.9px;background:#f5f5f5;"></div>
<div style="left:986.9px;top:63.5px;width:0.9px;height:496px;background:#e2e2e2;"></div>
<svg style="left:990px;top:53px" width="8" height="6" viewBox="0 0 8 6"><path d="M0.6 5.2L4 1l3.4 4.2z" fill="#6b6b6b"/></svg>
<div style="left:991px;top:62.5px;width:6px;height:161.5px;background:#6e6e6e;border-radius:3px;"></div>
<svg style="left:990.3px;top:552px" width="8" height="6" viewBox="0 0 8 6"><path d="M0.6 0.8L4 5l3.4-4.2z" fill="#6b6b6b"/></svg>
<div style="left:0px;top:559.5px;width:1000px;height:18.9px;background:#e5e8ee;"></div>
<svg style="left:0;top:559px" width="70" height="19" viewBox="0 0 70 19"><g fill="none" stroke="#7a7d84" stroke-width="1.1"><path d="M19.6 7.4l-2.4 2.8 2.4 2.8"/><path d="M38 7.4l2.4 2.8-2.4 2.8" stroke="#5f6268"/></g><g fill="#3c3c3c"><circle cx="57.6" cy="10.4" r="0.8"/><circle cx="60" cy="10.4" r="0.8"/><circle cx="62.4" cy="10.4" r="0.8"/></g></svg>
<span style="left:80.5px;top:565px;font-size:8.9px;line-height:10px;color:#333333;letter-spacing:-0.02px;">Statements Summary 2044</span>
<div style="left:202px;top:561px;width:61px;height:16.2px;background:#ffff8f;border-radius:2px;"></div>
<span style="left:207px;top:565px;font-size:8.9px;line-height:10px;color:#333333;letter-spacing:-0.38px;">CAPEX 2044</span>
<div style="left:268.6px;top:561px;width:54.8px;height:16.2px;background:#ffff8f;border-radius:2px;"></div>
<span style="left:274px;top:565px;font-size:8.9px;line-height:10px;color:#333333;letter-spacing:-0.38px;">OPEX 2044</span>
<span style="left:336px;top:565px;font-size:8.9px;line-height:10px;color:#333333;letter-spacing:-0.01px;">Key Metrics Charts</span>
<span style="left:429px;top:565px;font-size:8.9px;line-height:10px;color:#333333;letter-spacing:-0.13px;">Sales Summary Charts</span>
<span style="left:536px;top:565px;font-size:8.9px;line-height:10px;color:#333333;letter-spacing:-0.23px;">KPI Charts</span>
<span style="left:594px;top:565px;font-size:8.9px;line-height:10px;color:#333333;letter-spacing:-0.9px;">BEA</span>
<div style="left:620px;top:561px;width:50px;height:16.2px;background:#ffff8f;border-radius:2px;"></div>
<span style="left:627px;top:565px;font-size:8.9px;line-height:10px;color:#333333;letter-spacing:-0.44px;">Expenses</span>
<div style="left:675.5px;top:561px;width:89.5px;height:16.2px;background:#ffff8f;border-radius:2px;"></div>
<span style="left:681px;top:565px;font-size:8.9px;line-height:10px;color:#333333;letter-spacing:-0.08px;">COGS Assumptions</span>
<div style="left:770px;top:560.4px;width:98.5px;height:17.1px;background:#ffffff;border-radius:2px;"></div>
<div style="left:776px;top:575.2px;width:87px;height:1.2px;background:#2a8a55;"></div>
<span style="left:776px;top:564px;font-size:8.36px;line-height:10px;color:#2f3b32;font-weight:bold;">Salaries Assumptions</span>
<svg style="left:880px;top:559px" width="120" height="19" viewBox="0 0 120 19"><g fill="#3c3c3c"><circle cx="7.4" cy="10.4" r="0.8"/><circle cx="9.8" cy="10.4" r="0.8"/><circle cx="12.2" cy="10.4" r="0.8"/><circle cx="52" cy="7.6" r="0.8"/><circle cx="52" cy="10.4" r="0.8"/><circle cx="52" cy="13.2" r="0.8"/></g><path d="M27 10.4h8M31 6.4v8" stroke="#3c3c3c" stroke-width="1" fill="none"/><path d="M70.6 8l-3 2.4 3 2.4z" fill="#5c5c5c"/><rect x="73.4" y="8" width="11" height="4.8" rx="2.4" fill="#6a6a6a"/><path d="M100.6 8l3 2.4-3 2.4z" fill="#5c5c5c"/></svg>
<div style="left:0px;top:578.4px;width:1000px;height:13.6px;background:#f6f6f6;"></div>
<div style="left:0px;top:578.4px;width:1000px;height:0.8px;background:#e0e0e0;"></div>
<span style="left:7px;top:584px;font-size:6.64px;line-height:7px;color:#4a4a4a;">Ready</span>
<svg style="left:39px;top:581px" width="36" height="11" viewBox="0 0 36 11"><g fill="none" stroke="#3a3a3a" stroke-width="1.1"><rect x="1.6" y="2.4" width="7.6" height="7.6"/><path d="M1.6 4.6h7.6" stroke-width="1.4"/><circle cx="6.8" cy="7.8" r="1.9" fill="#f6f6f6"/><circle cx="6.8" cy="7.8" r="0.8" fill="#3a3a3a" stroke="none"/><circle cx="25.6" cy="2.8" r="1.1"/><path d="M22 4.8h7.2M25.6 4.8v2.6M25.6 7.2l-2.4 3.6M25.6 7.2l1.4 2M27.2 9.2l1.4 1.4 2.6-3"/></g></svg>
<span style="left:72px;top:584px;font-size:6.65px;line-height:7px;color:#333333;font-weight:bold;">Accessibility: Investigate</span>
<svg style="left:805px;top:580px" width="195" height="12" viewBox="0 0 195 12"><g fill="none" stroke="#555" stroke-width="0.8"><rect x="9.6" y="2.6" width="8.6" height="8.4" fill="#dedede"/><path d="M9.6 5.4h8.6M9.6 8.2h8.6M12.4 2.6v8.4M15.3 2.6v8.4"/><rect x="36" y="2.6" width="8.6" height="8.4"/><path d="M38.4 2.6v8.4M42.2 2.6v8.4M36 4.6h8.6"/><rect x="62" y="2.6" width="8.6" height="8.4"/><path d="M62 7h4.4v-4.4"/></g><path d="M83 7.2h4.4" stroke="#777" stroke-width="0.9"/><path d="M92 7.2h63" stroke="#9a9a9a" stroke-width="0.8"/><rect x="122.6" y="3.2" width="2.2" height="8" fill="#4a4a4a"/><path d="M160 7.2h4.4M162.2 5v4.4" stroke="#777" stroke-width="0.9"/></svg>
<span style="left:979px;top:584px;font-size:5.71px;line-height:6px;color:#4a4a4a;">100%</span>
</div></body></html>
